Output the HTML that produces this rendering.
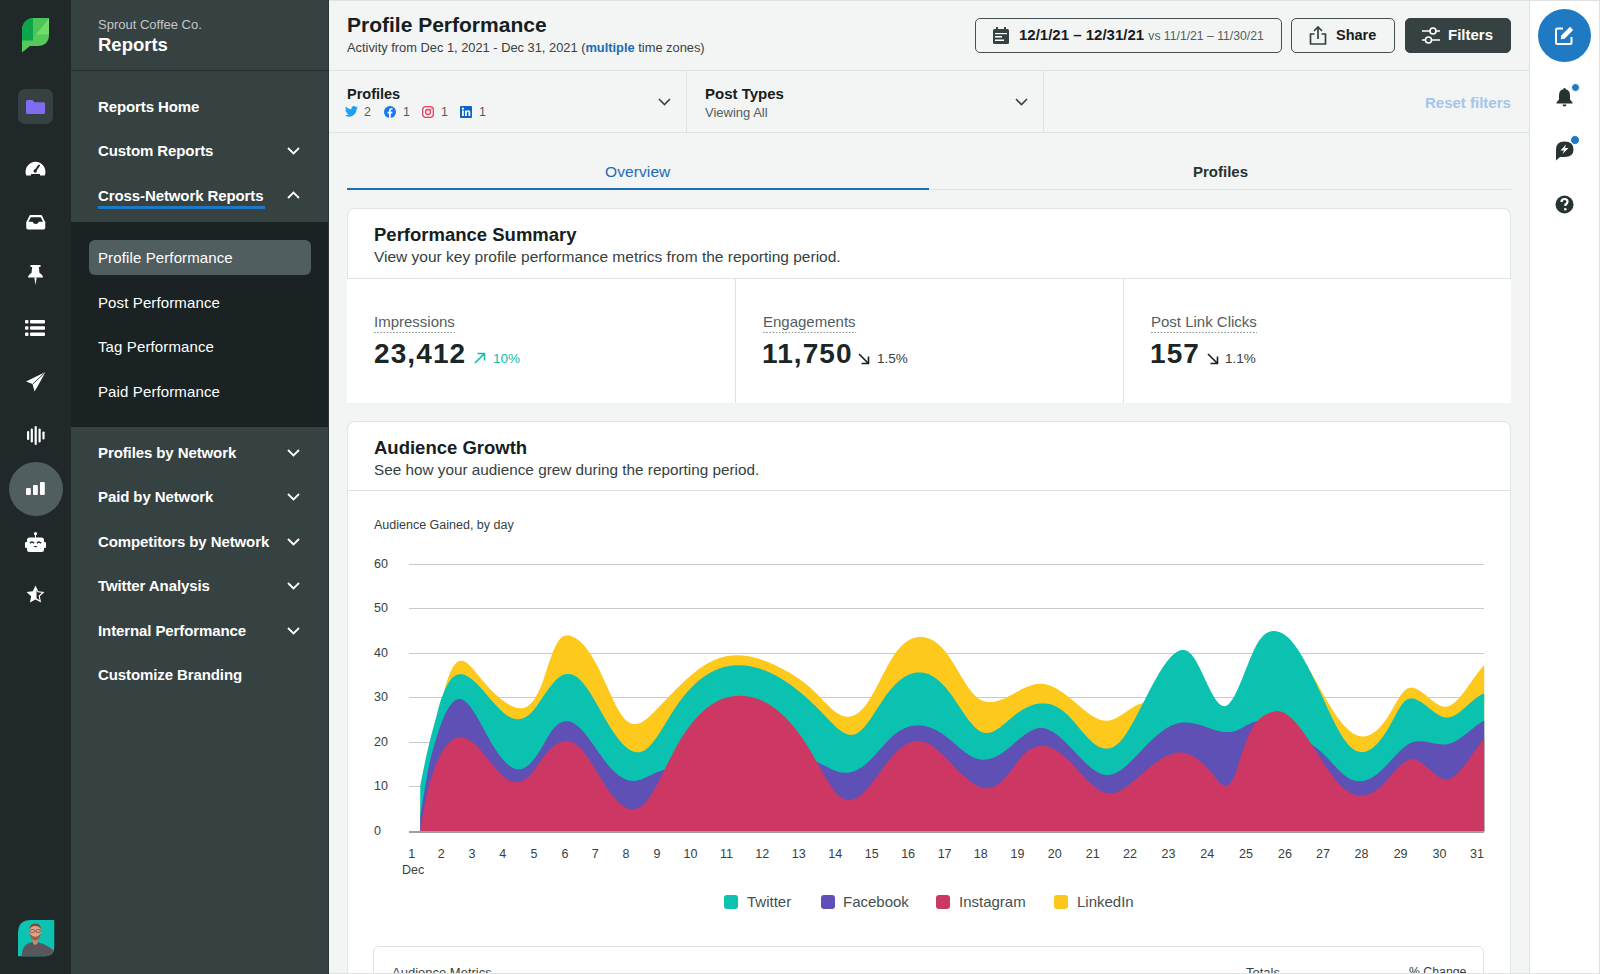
<!DOCTYPE html>
<html><head><meta charset="utf-8">
<style>
*{box-sizing:border-box;margin:0;padding:0}
html,body{width:1600px;height:974px;overflow:hidden;background:#f3f4f4;font-family:"Liberation Sans",sans-serif}
.abs{position:absolute}
svg{position:absolute;overflow:visible}
#rail{position:absolute;left:0;top:0;width:71px;height:974px;background:#202829}
#side{position:absolute;left:71px;top:0;width:258px;height:974px;background:#364141;border-right:1px solid #2b3535}
#side .hdr{position:absolute;left:0;top:0;width:257px;height:71px;border-bottom:1px solid #263030}
.nav{position:absolute;left:27px;color:#fff;font-size:15px;font-weight:700;white-space:nowrap;letter-spacing:-0.1px}
#sub{position:absolute;left:0;top:222px;width:257px;height:205px;background:#1a2223}
.subi{position:absolute;left:27px;color:#fff;font-size:15px;white-space:nowrap;letter-spacing:0.12px}
#rrail{position:absolute;left:1529px;top:0;width:71px;height:974px;background:#fff;border-left:1px solid #dfe2e2}
.t{position:absolute;white-space:nowrap;line-height:normal}
.btn{position:absolute;top:18px;height:35px;border:1px solid #455151;border-radius:5px;background:transparent}
.card{position:absolute;background:#fff;border:1px solid #e1e4e4;border-radius:8px}
.hl{position:absolute;height:1px;background:#dfe2e2}
.vl{position:absolute;width:1px;background:#dfe2e2}
.dk{color:#162020}
.ylab{position:absolute;left:374px;font-size:12.5px;color:#364141;width:16px;text-align:left}
.xlab{position:absolute;top:847px;font-size:12.5px;color:#364141;width:30px;margin-left:-15px;text-align:center}
.grid{position:absolute;left:409px;width:1075px;height:1px;background:#c6cbcb}
.sw{position:absolute;top:895px;width:14px;height:14px;border-radius:3px}
.leg{position:absolute;top:893px;font-size:15px;color:#445050}
.mlab{position:absolute;top:313px;font-size:15px;color:#515e5f;padding-bottom:3px;background:linear-gradient(to right,#8b9595 50%,transparent 50%) left bottom/3.2px 1.3px repeat-x}
.mval{position:absolute;top:338px;font-size:28px;font-weight:700;color:#1b2626;letter-spacing:1.1px}
.mpct{position:absolute;top:351px;font-size:13.5px;color:#364141}
</style></head><body>
<!-- left rail -->
<div id="rail">
  <svg style="left:22px;top:18px" width="28" height="35" viewBox="0 0 28 35">
    <path d="M0 12.5 C0 5 5 0 12 0 L27 0 L27 17 C27 24 22.5 28 16 28 L8 28 L0 34.5 Z" fill="#55c95a"/>
    <path d="M0 12.5 C0 5.5 4.5 0.3 11 0 L11 22.5 L0 22.5 Z" fill="#0da54b"/>
    <path d="M11 0 L27 0 L11 20.5 Z" fill="#4cc459"/>
    <path d="M13.9 16.5 L27 0.5 L27 16.5 Z" fill="#74db6b"/>
  </svg>
  <div class="abs" style="left:18px;top:89px;width:35px;height:35px;border-radius:7px;background:#364141"></div>
  <svg style="left:26px;top:100px" width="19" height="14" viewBox="0 0 19 14"><path d="M0 1.5 Q0 0 1.5 0 L6.5 0 L8.5 2.3 L17.5 2.3 Q19 2.3 19 3.8 L19 12.5 Q19 14 17.5 14 L1.5 14 Q0 14 0 12.5 Z" fill="#7f6cf0"/></svg>
  <!-- gauge -->
  <svg style="left:25px;top:159px" width="21" height="17" viewBox="0 0 21 17"><path d="M1.2 16.5 A10 10 0 1 1 19.8 16.5 Z" fill="#fff"/><path d="M14 6.5 L10.5 11.5" stroke="#202829" stroke-width="2" stroke-linecap="round"/><circle cx="10.2" cy="12" r="1.7" fill="#202829"/><rect x="6" y="15" width="9" height="2" fill="#202829"/></svg>
  <!-- inbox -->
  <svg style="left:25.5px;top:214.5px" width="19.5" height="14.5" viewBox="0 0 21 16"><path d="M4 0 L17 0 L21 8 L21 14 Q21 16 19 16 L2 16 Q0 16 0 14 L0 8 Z" fill="#fff"/><path d="M5 2.5 L16 2.5 L18.5 7.5 L14 7.5 Q13 10 10.5 10 Q8 10 7 7.5 L2.5 7.5 Z" fill="#202829"/></svg>
  <!-- pin -->
  <svg style="left:28px;top:265px" width="15" height="20" viewBox="0 0 15 20"><path d="M2.5 0 L12.5 0 L12.5 2 L10.8 2 L11.5 8 Q15 10 15 12.5 L0 12.5 Q0 10 3.5 8 L4.2 2 L2.5 2 Z" fill="#fff"/><path d="M6.3 12.5 L8.7 12.5 L7.5 20 Z" fill="#fff"/></svg>
  <!-- list -->
  <svg style="left:25px;top:320px" width="20" height="16" viewBox="0 0 20 16"><rect x="0" y="0" width="3.5" height="3.5" rx="1" fill="#fff"/><rect x="0" y="6.2" width="3.5" height="3.5" rx="1" fill="#fff"/><rect x="0" y="12.4" width="3.5" height="3.5" rx="1" fill="#fff"/><rect x="5" y="0" width="15" height="3.5" rx="1" fill="#fff"/><rect x="5" y="6.2" width="15" height="3.5" rx="1" fill="#fff"/><rect x="5" y="12.4" width="15" height="3.5" rx="1" fill="#fff"/></svg>
  <!-- send -->
  <svg style="left:26px;top:372px" width="20" height="20" viewBox="0 0 20 20"><path d="M19.5 0 L0 9.5 L6.5 12 L8.5 19.5 L11.5 14.5 Z" fill="#fff"/><path d="M19.5 0 L6.8 12" stroke="#202829" stroke-width="0.9"/></svg>
  <!-- waveform -->
  <svg style="left:27px;top:426px" width="18" height="19" viewBox="0 0 18 19"><rect x="0" y="5" width="2.2" height="9" rx="1.1" fill="#fff"/><rect x="3.7" y="2.5" width="2.2" height="14" rx="1.1" fill="#fff"/><rect x="7.6" y="0" width="2.2" height="19" rx="1.1" fill="#fff"/><rect x="11.5" y="2.5" width="2.2" height="14" rx="1.1" fill="#fff"/><rect x="15.4" y="5.5" width="2.2" height="8" rx="1.1" fill="#fff"/></svg>
  <div class="abs" style="left:9px;top:462px;width:54px;height:54px;border-radius:50%;background:#515e5f"></div>
  <svg style="left:26px;top:482px" width="19" height="13" viewBox="0 0 19 13"><rect x="0" y="6" width="4.8" height="7" rx="1" fill="#fff"/><rect x="7" y="3" width="4.8" height="10" rx="1" fill="#fff"/><rect x="14" y="0" width="4.8" height="13" rx="1" fill="#fff"/></svg>
  <!-- bot -->
  <svg style="left:25px;top:532px" width="21" height="20" viewBox="0 0 21 20"><circle cx="10.5" cy="1.7" r="1.6" fill="#fff"/><rect x="10" y="3" width="1" height="3" fill="#fff"/><rect x="2" y="5.5" width="17" height="14.5" rx="2.5" fill="#fff"/><rect x="0" y="10" width="21" height="6" rx="1" fill="#fff"/><path d="M5 11.3 Q7 8.8 9 11.3" stroke="#202829" stroke-width="1.6" fill="none"/><path d="M12 11.3 Q14 8.8 16 11.3" stroke="#202829" stroke-width="1.6" fill="none"/><path d="M8.5 14 Q10.5 16.5 12.5 14 Z" fill="#202829"/></svg>
  <!-- star -->
  <svg style="left:26px;top:585px" width="19" height="19" viewBox="0 0 19 19"><path d="M9.5 0.5 L12.2 6.3 L18.5 7 L13.8 11.3 L15.1 17.6 L9.5 14.4 L3.9 17.6 L5.2 11.3 L0.5 7 L6.8 6.3 Z" fill="#fff"/><path d="M10.5 5 L11.5 7.3 L15.8 7.8 L12.6 10.8 L13.5 15.2 L10.5 13.3 Z" fill="#202829"/></svg>
  <!-- avatar -->
  <svg style="left:17.5px;top:920px" width="36.5" height="36.5" viewBox="0 0 36.5 36.5">
    <defs><clipPath id="av"><path d="M0 13 Q0 0 13 0 L36.5 0 L36.5 26 Q36.5 36.5 26 36.5 L0 36.5 Z"/></clipPath></defs>
    <g clip-path="url(#av)">
      <rect x="0" y="0" width="36.5" height="36.5" fill="#0bc3b0"/>
      <path d="M3.5 36.5 L4.5 30 Q6.5 24 12.5 22.5 L17 21 L21 22.5 Q30 25 36 31 L36 36.5 Z" fill="#58575b"/>
      <path d="M14.5 19 L20 19 L19.5 23.5 L17.3 25 L15 23.5 Z" fill="#c98a70"/>
      <ellipse cx="17.3" cy="11.5" rx="5.6" ry="7.6" fill="#dfa488"/>
      <path d="M11.6 10 Q11.5 3.5 17.3 3.6 Q23 3.5 23 10 Q22 6 17.3 6 Q12.5 6 11.6 10 Z" fill="#7a4a35"/>
      <path d="M11.8 13 Q12.5 20 17.3 20.5 Q22 20 22.8 13 Q21 16.5 17.3 16.8 Q13.5 16.5 11.8 13 Z" fill="#9c5a3e"/>
      <rect x="12.3" y="9.6" width="4.3" height="2.8" rx="1" fill="none" stroke="#4a3a36" stroke-width="0.6"/><rect x="18" y="9.6" width="4.3" height="2.8" rx="1" fill="none" stroke="#4a3a36" stroke-width="0.6"/>
    </g>
  </svg>
</div>

<!-- sidebar -->
<div id="side">
  <div class="hdr"></div>
  <div class="t" style="left:27px;top:17px;font-size:13px;color:#c3c8c8">Sprout Coffee Co.</div>
  <div class="t" style="left:27px;top:34px;font-size:18.5px;font-weight:700;color:#fff">Reports</div>
  <div class="nav" style="top:98px">Reports Home</div>
  <div class="nav" style="top:142px">Custom Reports</div>
  <div class="nav" style="top:187px">Cross-Network Reports</div>
  <div class="abs" style="left:27px;top:206px;width:167px;height:3px;background:#2079c3"></div>
  <svg style="left:216px;top:147px" width="13" height="8" viewBox="0 0 13 8"><path d="M1 1 L6.5 6.5 L12 1" stroke="#fff" stroke-width="1.8" fill="none"/></svg>
  <svg style="left:216px;top:191px" width="13" height="8" viewBox="0 0 13 8"><path d="M1 7 L6.5 1.5 L12 7" stroke="#fff" stroke-width="1.8" fill="none"/></svg>
  <div id="sub">
    <div class="abs" style="left:18px;top:18px;width:222px;height:35px;border-radius:6px;background:#515e5f"></div>
    <div class="subi" style="top:27px">Profile Performance</div>
    <div class="subi" style="top:72px">Post Performance</div>
    <div class="subi" style="top:116px">Tag Performance</div>
    <div class="subi" style="top:161px">Paid Performance</div>
  </div>
  <div class="nav" style="top:444px">Profiles by Network</div>
  <div class="nav" style="top:488px">Paid by Network</div>
  <div class="nav" style="top:533px">Competitors by Network</div>
  <div class="nav" style="top:577px">Twitter Analysis</div>
  <div class="nav" style="top:622px">Internal Performance</div>
  <div class="nav" style="top:666px">Customize Branding</div>
  <svg style="left:216px;top:449px" width="13" height="8" viewBox="0 0 13 8"><path d="M1 1 L6.5 6.5 L12 1" stroke="#fff" stroke-width="1.8" fill="none"/></svg>
  <svg style="left:216px;top:493px" width="13" height="8" viewBox="0 0 13 8"><path d="M1 1 L6.5 6.5 L12 1" stroke="#fff" stroke-width="1.8" fill="none"/></svg>
  <svg style="left:216px;top:538px" width="13" height="8" viewBox="0 0 13 8"><path d="M1 1 L6.5 6.5 L12 1" stroke="#fff" stroke-width="1.8" fill="none"/></svg>
  <svg style="left:216px;top:582px" width="13" height="8" viewBox="0 0 13 8"><path d="M1 1 L6.5 6.5 L12 1" stroke="#fff" stroke-width="1.8" fill="none"/></svg>
  <svg style="left:216px;top:627px" width="13" height="8" viewBox="0 0 13 8"><path d="M1 1 L6.5 6.5 L12 1" stroke="#fff" stroke-width="1.8" fill="none"/></svg>
</div>

<!-- header -->
<div class="t dk" style="left:347px;top:13px;font-size:21px;font-weight:700">Profile Performance</div>
<div class="t" style="left:347px;top:39.5px;font-size:12.85px;color:#364141">Activity from Dec 1, 2021 - Dec 31, 2021 (<b style="color:#1b6cb8">multiple</b> time zones)</div>
<div class="btn" style="left:975px;width:307px"></div>
<svg style="left:993px;top:27px" width="16" height="17" viewBox="0 0 16 17"><rect x="3" y="0" width="2" height="4" fill="#364141"/><rect x="11" y="0" width="2" height="4" fill="#364141"/><rect x="0" y="2" width="16" height="15" rx="1.5" fill="#364141"/><rect x="2" y="6" width="12" height="1.2" fill="#fff"/><rect x="2" y="9" width="7" height="1.5" fill="#fff"/><rect x="2" y="12.5" width="9" height="1.5" fill="#fff"/></svg>
<div class="t dk" style="left:1019px;top:26px;font-size:15px;font-weight:700">12/1/21 – 12/31/21 <span style="font-size:12.2px;font-weight:400;color:#515e5f">vs 11/1/21 – 11/30/21</span></div>
<div class="btn" style="left:1291px;width:104px"></div>
<svg style="left:1309px;top:26px" width="18" height="19" viewBox="0 0 18 19"><path d="M9 13 L9 1.5 M5 5 L9 1 L13 5" stroke="#364141" stroke-width="1.7" fill="none"/><path d="M5.5 8 L1.5 8 L1.5 18 L16.5 18 L16.5 8 L12.5 8" stroke="#364141" stroke-width="1.7" fill="none"/></svg>
<div class="t dk" style="left:1336px;top:27px;font-size:14.5px;font-weight:700">Share</div>
<div class="btn" style="left:1405px;width:106px;background:#364141;border-color:#364141"></div>
<svg style="left:1421px;top:26px" width="20" height="19" viewBox="0 0 20 19"><path d="M1 5 L19 5 M1 14 L19 14" stroke="#fff" stroke-width="1.6"/><circle cx="12" cy="5" r="3" fill="#364141" stroke="#fff" stroke-width="1.6"/><circle cx="7.5" cy="14" r="3" fill="#364141" stroke="#fff" stroke-width="1.6"/></svg>
<div class="t" style="left:1448px;top:26px;font-size:15px;font-weight:700;color:#fff">Filters</div>
<div class="hl" style="left:329px;top:70px;width:1200px"></div>

<!-- filter bar -->
<div class="t dk" style="left:347px;top:86px;font-size:14.5px;font-weight:700">Profiles</div>
<svg style="left:345px;top:106px" width="13" height="11" viewBox="0 0 24 20"><path d="M24 2.4c-.9.4-1.8.6-2.8.8 1-.6 1.8-1.6 2.2-2.7-1 .6-2 1-3.1 1.2C19.3.7 18 0 16.6 0c-2.7 0-4.9 2.2-4.9 4.9 0 .4 0 .8.1 1.1C7.7 5.8 4.1 3.9 1.7.9c-.4.7-.7 1.6-.7 2.5 0 1.7.9 3.2 2.2 4.1-.8 0-1.6-.2-2.2-.6v.1c0 2.4 1.7 4.4 3.9 4.8-.4.1-.8.2-1.3.2-.3 0-.6 0-.9-.1.6 2 2.4 3.4 4.6 3.4-1.7 1.3-3.8 2.1-6.1 2.1-.4 0-.8 0-1.2-.1 2.2 1.4 4.8 2.2 7.5 2.2 9.1 0 14-7.5 14-14v-.6c1-.7 1.8-1.6 2.5-2.5z" fill="#1da1f2"/></svg>
<div class="t" style="left:364px;top:105px;font-size:12.5px;color:#515e5f">2</div>
<svg style="left:384px;top:106px" width="12" height="12" viewBox="0 0 24 24"><circle cx="12" cy="12" r="12" fill="#1877f2"/><path d="M13.5 24 L13.5 15 L16.5 15 L17 11.5 L13.5 11.5 L13.5 9.3 C13.5 8.3 13.8 7.6 15.2 7.6 L17 7.6 L17 4.5 C16.7 4.4 15.6 4.3 14.4 4.3 C11.8 4.3 10 5.9 10 8.8 L10 11.5 L7 11.5 L7 15 L10 15 L10 24 Z" fill="#fff"/></svg>
<div class="t" style="left:403px;top:105px;font-size:12.5px;color:#515e5f">1</div>
<svg style="left:422px;top:106px" width="12" height="12" viewBox="0 0 12 12"><rect x="0.7" y="0.7" width="10.6" height="10.6" rx="3" fill="none" stroke="#e4405f" stroke-width="1.3"/><circle cx="6" cy="6" r="2.5" fill="none" stroke="#e4405f" stroke-width="1.3"/><circle cx="9" cy="3" r="0.7" fill="#e4405f"/></svg>
<div class="t" style="left:441px;top:105px;font-size:12.5px;color:#515e5f">1</div>
<svg style="left:460px;top:106px" width="12" height="12" viewBox="0 0 12 12"><rect x="0" y="0" width="12" height="12" rx="1" fill="#0a66c2"/><rect x="2" y="4.5" width="1.8" height="5.5" fill="#fff"/><circle cx="2.9" cy="2.7" r="1.1" fill="#fff"/><path d="M5 4.5 L6.7 4.5 L6.7 5.3 Q7.3 4.3 8.5 4.3 Q10.3 4.3 10.3 6.6 L10.3 10 L8.5 10 L8.5 7 Q8.5 5.8 7.7 5.8 Q6.8 5.8 6.8 7 L6.8 10 L5 10 Z" fill="#fff"/></svg>
<div class="t" style="left:479px;top:105px;font-size:12.5px;color:#515e5f">1</div>
<svg style="left:658px;top:98px" width="13" height="8" viewBox="0 0 13 8"><path d="M1 1 L6.5 6.5 L12 1" stroke="#364141" stroke-width="1.6" fill="none"/></svg>
<div class="vl" style="left:686px;top:71px;height:61px"></div>
<div class="t dk" style="left:705px;top:85px;font-size:15px;font-weight:700">Post Types</div>
<div class="t" style="left:705px;top:105px;font-size:13px;color:#515e5f">Viewing All</div>
<svg style="left:1015px;top:98px" width="13" height="8" viewBox="0 0 13 8"><path d="M1 1 L6.5 6.5 L12 1" stroke="#364141" stroke-width="1.6" fill="none"/></svg>
<div class="vl" style="left:1043px;top:71px;height:61px"></div>
<div class="t" style="left:1425px;top:94px;font-size:15px;font-weight:700;color:#a3c6ea">Reset filters</div>
<div class="hl" style="left:329px;top:132px;width:1200px"></div>

<!-- tabs -->
<div class="t" style="left:605px;top:163px;font-size:15.5px;color:#1b6cb8;letter-spacing:0.1px">Overview</div>
<div class="t dk" style="left:1193px;top:163px;font-size:15px;font-weight:700;color:#273333">Profiles</div>
<div class="hl" style="left:929px;top:189px;width:582px"></div>
<div class="abs" style="left:347px;top:188px;width:582px;height:2px;background:#1a6fbf"></div>

<!-- performance summary -->
<div class="card" style="left:347px;top:208px;width:1164px;height:71px;border-radius:8px 8px 0 0"></div>
<div class="abs" style="left:347px;top:279px;width:1164px;height:124px;background:#fff"></div>
<div class="hl" style="left:347px;top:278px;width:1164px"></div>
<div class="vl" style="left:735px;top:279px;height:124px"></div>
<div class="vl" style="left:1123px;top:279px;height:124px"></div>
<div class="t dk" style="left:374px;top:224px;font-size:18.5px;font-weight:700">Performance Summary</div>
<div class="t" style="left:374px;top:248px;font-size:15.5px;color:#364141">View your key profile performance metrics from the reporting period.</div>

<div class="mlab" style="left:374px">Impressions</div>
<div class="mval" style="left:374px">23,412</div>
<svg style="left:474px;top:352px" width="12" height="12" viewBox="0 0 12 12"><path d="M1 11 L10.5 1.5 M3.5 1.5 L10.5 1.5 L10.5 8.5" stroke="#12bdac" stroke-width="1.6" fill="none"/></svg>
<div class="mpct" style="left:493px;color:#12bdac">10%</div>

<div class="mlab" style="left:763px">Engagements</div>
<div class="mval" style="left:762px">11,750</div>
<svg style="left:858px;top:353px" width="12" height="12" viewBox="0 0 12 12"><path d="M1 1 L10.5 10.5 M3.5 10.5 L10.5 10.5 L10.5 3.5" stroke="#162020" stroke-width="1.6" fill="none"/></svg>
<div class="mpct" style="left:877px">1.5%</div>

<div class="mlab" style="left:1151px">Post Link Clicks</div>
<div class="mval" style="left:1150px">157</div>
<svg style="left:1207px;top:353px" width="12" height="12" viewBox="0 0 12 12"><path d="M1 1 L10.5 10.5 M3.5 10.5 L10.5 10.5 L10.5 3.5" stroke="#162020" stroke-width="1.6" fill="none"/></svg>
<div class="mpct" style="left:1225px">1.1%</div>

<!-- audience growth -->
<div class="card" style="left:347px;top:421px;width:1164px;height:600px"></div>
<div class="hl" style="left:348px;top:490px;width:1162px"></div>
<div class="t dk" style="left:374px;top:437px;font-size:18.5px;font-weight:700">Audience Growth</div>
<div class="t" style="left:374px;top:460.5px;font-size:15.3px;color:#364141">See how your audience grew during the reporting period.</div>
<div class="t" style="left:374px;top:517.5px;font-size:12.5px;color:#364141">Audience Gained, by day</div>

<div class="grid" style="top:564px"></div>
<div class="grid" style="top:608px"></div>
<div class="grid" style="top:653px"></div>
<div class="grid" style="top:697px"></div>
<div class="grid" style="top:742px"></div>
<div class="grid" style="top:786px"></div>
<div class="ylab" style="top:557px">60</div>
<div class="ylab" style="top:601px">50</div>
<div class="ylab" style="top:646px">40</div>
<div class="ylab" style="top:690px">30</div>
<div class="ylab" style="top:735px">20</div>
<div class="ylab" style="top:779px">10</div>
<div class="ylab" style="top:824px">0</div>

<svg style="left:0;top:0" width="1600" height="974" viewBox="0 0 1600 974"><path d="M420.2 831.5 L420.2 812.0 L421.2 805.8 L422.2 799.6 L423.2 793.6 L424.2 787.6 L425.2 781.8 L426.2 776.1 L427.2 770.5 L428.2 765.0 L429.2 759.6 L430.2 754.3 L431.2 749.1 L432.2 744.0 L433.2 739.0 L434.2 734.2 L435.2 729.4 L436.2 724.7 L437.2 720.1 L438.2 715.6 L439.2 711.2 L440.2 706.9 L441.2 702.8 L442.2 698.7 L443.2 694.8 L444.2 691.1 L445.2 687.4 L446.2 683.9 L447.2 680.6 L448.2 677.6 L449.2 675.0 L450.2 672.6 L451.2 670.4 L452.2 668.4 L453.2 666.7 L454.2 665.2 L455.2 663.9 L456.2 662.9 L457.2 662.1 L458.2 661.5 L459.2 661.0 L460.2 660.8 L461.2 660.7 L462.2 660.8 L463.2 661.1 L464.2 661.5 L465.2 662.0 L466.2 662.6 L467.2 663.3 L468.2 664.1 L469.2 665.0 L470.2 666.0 L471.2 667.0 L472.2 668.1 L473.2 669.2 L474.2 670.4 L475.2 671.6 L476.2 672.8 L477.2 674.0 L478.2 675.3 L479.2 676.5 L480.2 677.7 L481.2 678.8 L482.2 680.0 L483.2 681.2 L484.2 682.3 L485.2 683.5 L486.2 684.6 L487.2 685.7 L488.2 686.8 L489.2 687.9 L490.2 688.9 L491.2 689.9 L492.2 691.0 L493.2 692.0 L494.2 692.9 L495.2 693.9 L496.2 694.8 L497.2 695.8 L498.2 696.6 L499.2 697.5 L500.2 698.4 L501.2 699.2 L502.2 700.0 L503.2 700.7 L504.2 701.4 L505.2 702.1 L506.2 702.8 L507.2 703.5 L508.2 704.1 L509.2 704.7 L510.2 705.2 L511.2 705.7 L512.2 706.2 L513.2 706.6 L514.2 707.0 L515.2 707.4 L516.2 707.7 L517.2 707.9 L518.2 708.1 L519.2 708.2 L520.2 708.3 L521.2 708.3 L522.2 708.2 L523.2 708.0 L524.2 707.7 L525.2 707.4 L526.2 706.9 L527.2 706.4 L528.2 705.7 L529.2 704.9 L530.2 704.0 L531.2 703.1 L532.2 701.9 L533.2 700.7 L534.2 699.3 L535.2 697.8 L536.2 696.1 L537.2 694.3 L538.2 692.4 L539.2 690.3 L540.2 688.0 L541.2 685.6 L542.2 683.0 L543.2 680.2 L544.2 677.3 L545.2 674.3 L546.2 671.3 L547.2 668.2 L548.2 665.1 L549.2 662.1 L550.2 659.2 L551.2 656.4 L552.2 653.7 L553.2 651.2 L554.2 648.9 L555.2 646.7 L556.2 644.7 L557.2 642.9 L558.2 641.3 L559.2 639.9 L560.2 638.7 L561.2 637.7 L562.2 636.9 L563.2 636.3 L564.2 635.9 L565.2 635.6 L566.2 635.4 L567.2 635.4 L568.2 635.5 L569.2 635.6 L570.2 635.8 L571.2 636.1 L572.2 636.5 L573.2 636.9 L574.2 637.4 L575.2 637.9 L576.2 638.5 L577.2 639.2 L578.2 639.9 L579.2 640.7 L580.2 641.6 L581.2 642.5 L582.2 643.5 L583.2 644.6 L584.2 645.7 L585.2 646.9 L586.2 648.1 L587.2 649.4 L588.2 650.8 L589.2 652.2 L590.2 653.7 L591.2 655.3 L592.2 656.9 L593.2 658.5 L594.2 660.3 L595.2 662.1 L596.2 663.9 L597.2 665.8 L598.2 667.8 L599.2 669.8 L600.2 671.8 L601.2 673.9 L602.2 676.1 L603.2 678.2 L604.2 680.4 L605.2 682.6 L606.2 684.8 L607.2 687.0 L608.2 689.2 L609.2 691.4 L610.2 693.6 L611.2 695.8 L612.2 697.9 L613.2 699.9 L614.2 702.0 L615.2 704.0 L616.2 705.9 L617.2 707.7 L618.2 709.5 L619.2 711.2 L620.2 712.9 L621.2 714.4 L622.2 715.8 L623.2 717.2 L624.2 718.4 L625.2 719.5 L626.2 720.4 L627.2 721.3 L628.2 722.0 L629.2 722.6 L630.2 723.1 L631.2 723.5 L632.2 723.8 L633.2 724.0 L634.2 724.1 L635.2 724.1 L636.2 724.0 L637.2 723.9 L638.2 723.6 L639.2 723.3 L640.2 722.9 L641.2 722.4 L642.2 721.9 L643.2 721.3 L644.2 720.6 L645.2 719.9 L646.2 719.2 L647.2 718.4 L648.2 717.5 L649.2 716.6 L650.2 715.7 L651.2 714.8 L652.2 713.8 L653.2 712.8 L654.2 711.8 L655.2 710.8 L656.2 709.8 L657.2 708.7 L658.2 707.7 L659.2 706.6 L660.2 705.6 L661.2 704.6 L662.2 703.5 L663.2 702.5 L664.2 701.4 L665.2 700.4 L666.2 699.4 L667.2 698.3 L668.2 697.3 L669.2 696.2 L670.2 695.2 L671.2 694.2 L672.2 693.2 L673.2 692.2 L674.2 691.1 L675.2 690.1 L676.2 689.1 L677.2 688.1 L678.2 687.2 L679.2 686.2 L680.2 685.2 L681.2 684.2 L682.2 683.3 L683.2 682.3 L684.2 681.4 L685.2 680.5 L686.2 679.6 L687.2 678.7 L688.2 677.8 L689.2 676.9 L690.2 676.0 L691.2 675.2 L692.2 674.3 L693.2 673.5 L694.2 672.7 L695.2 671.9 L696.2 671.1 L697.2 670.3 L698.2 669.6 L699.2 668.8 L700.2 668.1 L701.2 667.4 L702.2 666.7 L703.2 666.0 L704.2 665.4 L705.2 664.8 L706.2 664.2 L707.2 663.6 L708.2 663.0 L709.2 662.4 L710.2 661.9 L711.2 661.4 L712.2 660.9 L713.2 660.5 L714.2 660.0 L715.2 659.6 L716.2 659.2 L717.2 658.8 L718.2 658.5 L719.2 658.1 L720.2 657.8 L721.2 657.5 L722.2 657.2 L723.2 657.0 L724.2 656.7 L725.2 656.5 L726.2 656.3 L727.2 656.1 L728.2 656.0 L729.2 655.8 L730.2 655.7 L731.2 655.6 L732.2 655.5 L733.2 655.4 L734.2 655.4 L735.2 655.3 L736.2 655.3 L737.2 655.3 L738.2 655.3 L739.2 655.3 L740.2 655.4 L741.2 655.4 L742.2 655.5 L743.2 655.6 L744.2 655.7 L745.2 655.8 L746.2 655.9 L747.2 656.1 L748.2 656.2 L749.2 656.4 L750.2 656.6 L751.2 656.8 L752.2 657.0 L753.2 657.2 L754.2 657.5 L755.2 657.7 L756.2 658.0 L757.2 658.3 L758.2 658.6 L759.2 658.9 L760.2 659.2 L761.2 659.5 L762.2 659.9 L763.2 660.2 L764.2 660.6 L765.2 661.0 L766.2 661.3 L767.2 661.7 L768.2 662.1 L769.2 662.6 L770.2 663.0 L771.2 663.4 L772.2 663.9 L773.2 664.3 L774.2 664.8 L775.2 665.2 L776.2 665.7 L777.2 666.2 L778.2 666.7 L779.2 667.2 L780.2 667.7 L781.2 668.2 L782.2 668.8 L783.2 669.3 L784.2 669.8 L785.2 670.4 L786.2 670.9 L787.2 671.5 L788.2 672.1 L789.2 672.6 L790.2 673.2 L791.2 673.8 L792.2 674.4 L793.2 675.0 L794.2 675.7 L795.2 676.3 L796.2 677.0 L797.2 677.6 L798.2 678.3 L799.2 679.0 L800.2 679.7 L801.2 680.4 L802.2 681.1 L803.2 681.9 L804.2 682.6 L805.2 683.4 L806.2 684.2 L807.2 685.0 L808.2 685.9 L809.2 686.7 L810.2 687.6 L811.2 688.5 L812.2 689.4 L813.2 690.3 L814.2 691.3 L815.2 692.2 L816.2 693.2 L817.2 694.3 L818.2 695.3 L819.2 696.3 L820.2 697.4 L821.2 698.4 L822.2 699.4 L823.2 700.5 L824.2 701.5 L825.2 702.6 L826.2 703.6 L827.2 704.6 L828.2 705.6 L829.2 706.5 L830.2 707.5 L831.2 708.4 L832.2 709.3 L833.2 710.1 L834.2 710.9 L835.2 711.7 L836.2 712.4 L837.2 713.1 L838.2 713.7 L839.2 714.3 L840.2 714.8 L841.2 715.3 L842.2 715.7 L843.2 716.0 L844.2 716.3 L845.2 716.5 L846.2 716.7 L847.2 716.7 L848.2 716.7 L849.2 716.7 L850.2 716.5 L851.2 716.3 L852.2 716.1 L853.2 715.7 L854.2 715.3 L855.2 714.8 L856.2 714.3 L857.2 713.6 L858.2 712.9 L859.2 712.1 L860.2 711.3 L861.2 710.3 L862.2 709.3 L863.2 708.2 L864.2 707.1 L865.2 705.8 L866.2 704.5 L867.2 703.1 L868.2 701.6 L869.2 700.0 L870.2 698.4 L871.2 696.7 L872.2 695.0 L873.2 693.2 L874.2 691.4 L875.2 689.6 L876.2 687.7 L877.2 685.8 L878.2 683.9 L879.2 681.9 L880.2 680.0 L881.2 678.0 L882.2 676.1 L883.2 674.1 L884.2 672.2 L885.2 670.3 L886.2 668.4 L887.2 666.6 L888.2 664.7 L889.2 663.0 L890.2 661.2 L891.2 659.6 L892.2 657.9 L893.2 656.4 L894.2 654.9 L895.2 653.4 L896.2 652.1 L897.2 650.8 L898.2 649.5 L899.2 648.4 L900.2 647.3 L901.2 646.2 L902.2 645.2 L903.2 644.3 L904.2 643.4 L905.2 642.6 L906.2 641.9 L907.2 641.2 L908.2 640.5 L909.2 640.0 L910.2 639.4 L911.2 639.0 L912.2 638.5 L913.2 638.2 L914.2 637.8 L915.2 637.6 L916.2 637.3 L917.2 637.2 L918.2 637.1 L919.2 637.0 L920.2 636.9 L921.2 637.0 L922.2 637.0 L923.2 637.1 L924.2 637.3 L925.2 637.4 L926.2 637.7 L927.2 638.0 L928.2 638.3 L929.2 638.7 L930.2 639.1 L931.2 639.6 L932.2 640.1 L933.2 640.6 L934.2 641.3 L935.2 641.9 L936.2 642.6 L937.2 643.4 L938.2 644.2 L939.2 645.1 L940.2 646.0 L941.2 647.0 L942.2 648.1 L943.2 649.2 L944.2 650.3 L945.2 651.5 L946.2 652.8 L947.2 654.1 L948.2 655.5 L949.2 656.9 L950.2 658.4 L951.2 659.9 L952.2 661.5 L953.2 663.1 L954.2 664.7 L955.2 666.4 L956.2 668.0 L957.2 669.7 L958.2 671.4 L959.2 673.1 L960.2 674.8 L961.2 676.4 L962.2 678.1 L963.2 679.7 L964.2 681.3 L965.2 682.9 L966.2 684.5 L967.2 686.0 L968.2 687.4 L969.2 688.8 L970.2 690.1 L971.2 691.4 L972.2 692.6 L973.2 693.8 L974.2 694.8 L975.2 695.8 L976.2 696.7 L977.2 697.5 L978.2 698.2 L979.2 698.9 L980.2 699.5 L981.2 700.0 L982.2 700.5 L983.2 700.9 L984.2 701.2 L985.2 701.5 L986.2 701.7 L987.2 701.9 L988.2 702.0 L989.2 702.1 L990.2 702.1 L991.2 702.1 L992.2 702.0 L993.2 701.9 L994.2 701.7 L995.2 701.5 L996.2 701.3 L997.2 701.0 L998.2 700.7 L999.2 700.4 L1000.2 700.1 L1001.2 699.7 L1002.2 699.3 L1003.2 698.9 L1004.2 698.4 L1005.2 698.0 L1006.2 697.5 L1007.2 697.0 L1008.2 696.5 L1009.2 696.0 L1010.2 695.5 L1011.2 695.0 L1012.2 694.4 L1013.2 693.9 L1014.2 693.4 L1015.2 692.8 L1016.2 692.3 L1017.2 691.7 L1018.2 691.2 L1019.2 690.7 L1020.2 690.1 L1021.2 689.6 L1022.2 689.1 L1023.2 688.6 L1024.2 688.1 L1025.2 687.7 L1026.2 687.2 L1027.2 686.8 L1028.2 686.4 L1029.2 686.0 L1030.2 685.7 L1031.2 685.3 L1032.2 685.0 L1033.2 684.7 L1034.2 684.5 L1035.2 684.3 L1036.2 684.1 L1037.2 684.0 L1038.2 683.8 L1039.2 683.8 L1040.2 683.7 L1041.2 683.8 L1042.2 683.8 L1043.2 683.9 L1044.2 684.1 L1045.2 684.2 L1046.2 684.5 L1047.2 684.7 L1048.2 685.0 L1049.2 685.3 L1050.2 685.7 L1051.2 686.1 L1052.2 686.5 L1053.2 687.0 L1054.2 687.5 L1055.2 688.0 L1056.2 688.5 L1057.2 689.1 L1058.2 689.7 L1059.2 690.3 L1060.2 690.9 L1061.2 691.6 L1062.2 692.3 L1063.2 693.0 L1064.2 693.7 L1065.2 694.4 L1066.2 695.2 L1067.2 696.0 L1068.2 696.7 L1069.2 697.5 L1070.2 698.3 L1071.2 699.1 L1072.2 700.0 L1073.2 700.8 L1074.2 701.6 L1075.2 702.5 L1076.2 703.3 L1077.2 704.1 L1078.2 705.0 L1079.2 705.8 L1080.2 706.7 L1081.2 707.5 L1082.2 708.4 L1083.2 709.2 L1084.2 710.0 L1085.2 710.8 L1086.2 711.6 L1087.2 712.4 L1088.2 713.1 L1089.2 713.8 L1090.2 714.5 L1091.2 715.2 L1092.2 715.9 L1093.2 716.5 L1094.2 717.1 L1095.2 717.6 L1096.2 718.1 L1097.2 718.6 L1098.2 719.0 L1099.2 719.4 L1100.2 719.8 L1101.2 720.1 L1102.2 720.3 L1103.2 720.5 L1104.2 720.6 L1105.2 720.7 L1106.2 720.7 L1107.2 720.7 L1108.2 720.6 L1109.2 720.5 L1110.2 720.2 L1111.2 720.0 L1112.2 719.7 L1113.2 719.3 L1114.2 718.9 L1115.2 718.4 L1116.2 717.9 L1117.2 717.4 L1118.2 716.9 L1119.2 716.3 L1120.2 715.7 L1121.2 715.0 L1122.2 714.4 L1123.2 713.7 L1124.2 713.1 L1125.2 712.4 L1126.2 711.7 L1127.2 711.1 L1128.2 710.4 L1129.2 709.7 L1130.2 709.1 L1131.2 708.4 L1132.2 707.8 L1133.2 707.2 L1134.2 706.6 L1135.2 706.1 L1136.2 705.6 L1137.2 705.1 L1138.2 704.6 L1139.2 704.2 L1140.2 703.9 L1141.2 703.6 L1142.2 703.3 L1143.2 703.1 L1144.2 702.9 L1145.2 702.9 L1146.2 702.8 L1147.2 702.8 L1148.2 702.9 L1149.2 703.0 L1150.2 703.2 L1151.2 703.4 L1152.2 703.6 L1153.2 703.9 L1154.2 704.2 L1155.2 704.6 L1156.2 705.0 L1157.2 705.4 L1158.2 705.8 L1159.2 706.2 L1160.2 706.7 L1161.2 707.2 L1162.2 707.7 L1163.2 708.2 L1164.2 708.7 L1165.2 709.2 L1166.2 709.7 L1167.2 710.2 L1168.2 710.7 L1169.2 711.2 L1170.2 711.6 L1171.2 712.1 L1172.2 712.5 L1173.2 713.0 L1174.2 713.4 L1175.2 713.8 L1176.2 714.2 L1177.2 714.6 L1178.2 715.0 L1179.2 715.4 L1180.2 715.7 L1181.2 716.0 L1182.2 716.4 L1183.2 716.7 L1184.2 717.0 L1185.2 717.3 L1186.2 717.5 L1187.2 717.8 L1188.2 718.0 L1189.2 718.3 L1190.2 718.5 L1191.2 718.7 L1192.2 718.9 L1193.2 719.1 L1194.2 719.3 L1195.2 719.4 L1196.2 719.6 L1197.2 719.7 L1198.2 719.8 L1199.2 719.9 L1200.2 720.0 L1201.2 720.1 L1202.2 720.2 L1203.2 720.2 L1204.2 720.2 L1205.2 720.3 L1206.2 720.3 L1207.2 720.3 L1208.2 720.3 L1209.2 720.3 L1210.2 720.2 L1211.2 720.2 L1212.2 720.1 L1213.2 720.1 L1214.2 720.0 L1215.2 719.9 L1216.2 719.8 L1217.2 719.6 L1218.2 719.5 L1219.2 719.4 L1220.2 719.2 L1221.2 719.0 L1222.2 718.8 L1223.2 718.6 L1224.2 718.4 L1225.2 718.2 L1226.2 718.0 L1227.2 717.7 L1228.2 717.5 L1229.2 717.2 L1230.2 716.9 L1231.2 716.6 L1232.2 716.2 L1233.2 715.9 L1234.2 715.5 L1235.2 715.1 L1236.2 714.7 L1237.2 714.3 L1238.2 713.8 L1239.2 713.3 L1240.2 712.8 L1241.2 712.2 L1242.2 711.7 L1243.2 711.1 L1244.2 710.4 L1245.2 709.8 L1246.2 709.1 L1247.2 708.4 L1248.2 707.6 L1249.2 706.8 L1250.2 706.0 L1251.2 705.1 L1252.2 704.2 L1253.2 703.2 L1254.2 702.2 L1255.2 701.2 L1256.2 700.2 L1257.2 699.0 L1258.2 697.9 L1259.2 696.7 L1260.2 695.4 L1261.2 694.1 L1262.2 692.8 L1263.2 691.4 L1264.2 690.0 L1265.2 688.5 L1266.2 686.9 L1267.2 685.4 L1268.2 683.7 L1269.2 682.1 L1270.2 680.4 L1271.2 678.7 L1272.2 677.1 L1273.2 675.4 L1274.2 673.7 L1275.2 672.0 L1276.2 670.4 L1277.2 668.8 L1278.2 667.2 L1279.2 665.7 L1280.2 664.2 L1281.2 662.8 L1282.2 661.4 L1283.2 660.1 L1284.2 658.9 L1285.2 657.8 L1286.2 656.8 L1287.2 655.9 L1288.2 655.1 L1289.2 654.4 L1290.2 653.8 L1291.2 653.4 L1292.2 653.1 L1293.2 652.9 L1294.2 652.9 L1295.2 653.1 L1296.2 653.4 L1297.2 653.9 L1298.2 654.6 L1299.2 655.4 L1300.2 656.4 L1301.2 657.5 L1302.2 658.7 L1303.2 660.1 L1304.2 661.5 L1305.2 663.0 L1306.2 664.5 L1307.2 666.1 L1308.2 667.8 L1309.2 669.4 L1310.2 671.1 L1311.2 672.8 L1312.2 674.6 L1313.2 676.3 L1314.2 678.1 L1315.2 679.8 L1316.2 681.6 L1317.2 683.4 L1318.2 685.2 L1319.2 687.0 L1320.2 688.8 L1321.2 690.6 L1322.2 692.3 L1323.2 694.1 L1324.2 695.9 L1325.2 697.6 L1326.2 699.4 L1327.2 701.1 L1328.2 702.8 L1329.2 704.5 L1330.2 706.1 L1331.2 707.8 L1332.2 709.4 L1333.2 711.0 L1334.2 712.5 L1335.2 714.0 L1336.2 715.5 L1337.2 716.9 L1338.2 718.3 L1339.2 719.6 L1340.2 720.9 L1341.2 722.2 L1342.2 723.4 L1343.2 724.6 L1344.2 725.7 L1345.2 726.7 L1346.2 727.8 L1347.2 728.7 L1348.2 729.7 L1349.2 730.5 L1350.2 731.3 L1351.2 732.1 L1352.2 732.8 L1353.2 733.4 L1354.2 734.0 L1355.2 734.5 L1356.2 735.0 L1357.2 735.4 L1358.2 735.7 L1359.2 736.0 L1360.2 736.2 L1361.2 736.3 L1362.2 736.4 L1363.2 736.4 L1364.2 736.4 L1365.2 736.3 L1366.2 736.1 L1367.2 735.8 L1368.2 735.5 L1369.2 735.1 L1370.2 734.7 L1371.2 734.2 L1372.2 733.6 L1373.2 733.0 L1374.2 732.3 L1375.2 731.5 L1376.2 730.7 L1377.2 729.8 L1378.2 728.9 L1379.2 727.9 L1380.2 726.8 L1381.2 725.7 L1382.2 724.5 L1383.2 723.3 L1384.2 722.0 L1385.2 720.6 L1386.2 719.2 L1387.2 717.7 L1388.2 716.2 L1389.2 714.6 L1390.2 713.0 L1391.2 711.3 L1392.2 709.5 L1393.2 707.8 L1394.2 706.0 L1395.2 704.2 L1396.2 702.5 L1397.2 700.8 L1398.2 699.1 L1399.2 697.5 L1400.2 696.0 L1401.2 694.5 L1402.2 693.2 L1403.2 692.0 L1404.2 690.9 L1405.2 690.0 L1406.2 689.2 L1407.2 688.6 L1408.2 688.2 L1409.2 687.9 L1410.2 687.7 L1411.2 687.6 L1412.2 687.7 L1413.2 687.8 L1414.2 688.1 L1415.2 688.4 L1416.2 688.8 L1417.2 689.3 L1418.2 689.8 L1419.2 690.4 L1420.2 691.0 L1421.2 691.7 L1422.2 692.4 L1423.2 693.2 L1424.2 693.9 L1425.2 694.8 L1426.2 695.6 L1427.2 696.4 L1428.2 697.3 L1429.2 698.1 L1430.2 698.9 L1431.2 699.8 L1432.2 700.6 L1433.2 701.3 L1434.2 702.1 L1435.2 702.8 L1436.2 703.5 L1437.2 704.1 L1438.2 704.7 L1439.2 705.2 L1440.2 705.7 L1441.2 706.1 L1442.2 706.4 L1443.2 706.6 L1444.2 706.7 L1445.2 706.8 L1446.2 706.7 L1447.2 706.6 L1448.2 706.3 L1449.2 706.0 L1450.2 705.5 L1451.2 705.0 L1452.2 704.3 L1453.2 703.6 L1454.2 702.8 L1455.2 702.0 L1456.2 701.1 L1457.2 700.1 L1458.2 699.0 L1459.2 697.9 L1460.2 696.8 L1461.2 695.5 L1462.2 694.3 L1463.2 693.0 L1464.2 691.7 L1465.2 690.4 L1466.2 689.0 L1467.2 687.6 L1468.2 686.2 L1469.2 684.8 L1470.2 683.4 L1471.2 681.9 L1472.2 680.5 L1473.2 679.1 L1474.2 677.7 L1475.2 676.3 L1476.2 674.9 L1477.2 673.6 L1478.2 672.3 L1479.2 671.0 L1480.2 669.7 L1481.2 668.5 L1482.2 667.4 L1483.2 666.3 L1484.2 665.2 L1484.2 831.5Z" fill="#fdc91d"/><path d="M420.2 831.5 L420.2 786.0 L421.2 780.8 L422.2 775.7 L423.2 770.8 L424.2 766.0 L425.2 761.3 L426.2 756.6 L427.2 752.1 L428.2 747.7 L429.2 743.5 L430.2 739.4 L431.2 735.5 L432.2 731.8 L433.2 728.1 L434.2 724.4 L435.2 720.7 L436.2 716.9 L437.2 713.1 L438.2 709.2 L439.2 705.6 L440.2 702.1 L441.2 699.0 L442.2 696.3 L443.2 693.7 L444.2 691.3 L445.2 689.0 L446.2 686.9 L447.2 685.0 L448.2 683.3 L449.2 681.7 L450.2 680.4 L451.2 679.1 L452.2 678.0 L453.2 677.1 L454.2 676.3 L455.2 675.7 L456.2 675.1 L457.2 674.7 L458.2 674.4 L459.2 674.2 L460.2 674.2 L461.2 674.2 L462.2 674.3 L463.2 674.5 L464.2 674.8 L465.2 675.2 L466.2 675.6 L467.2 676.2 L468.2 676.7 L469.2 677.4 L470.2 678.1 L471.2 678.8 L472.2 679.6 L473.2 680.4 L474.2 681.3 L475.2 682.2 L476.2 683.2 L477.2 684.1 L478.2 685.2 L479.2 686.2 L480.2 687.3 L481.2 688.4 L482.2 689.5 L483.2 690.6 L484.2 691.7 L485.2 692.9 L486.2 694.0 L487.2 695.2 L488.2 696.4 L489.2 697.6 L490.2 698.7 L491.2 699.9 L492.2 701.0 L493.2 702.2 L494.2 703.3 L495.2 704.4 L496.2 705.5 L497.2 706.6 L498.2 707.6 L499.2 708.7 L500.2 709.7 L501.2 710.6 L502.2 711.5 L503.2 712.4 L504.2 713.3 L505.2 714.1 L506.2 714.8 L507.2 715.5 L508.2 716.2 L509.2 716.8 L510.2 717.3 L511.2 717.8 L512.2 718.2 L513.2 718.5 L514.2 718.8 L515.2 719.0 L516.2 719.2 L517.2 719.3 L518.2 719.3 L519.2 719.2 L520.2 719.1 L521.2 718.9 L522.2 718.6 L523.2 718.3 L524.2 717.8 L525.2 717.3 L526.2 716.8 L527.2 716.1 L528.2 715.4 L529.2 714.6 L530.2 713.7 L531.2 712.8 L532.2 711.7 L533.2 710.6 L534.2 709.4 L535.2 708.1 L536.2 706.8 L537.2 705.4 L538.2 704.0 L539.2 702.5 L540.2 701.1 L541.2 699.6 L542.2 698.1 L543.2 696.6 L544.2 695.1 L545.2 693.6 L546.2 692.2 L547.2 690.8 L548.2 689.4 L549.2 688.0 L550.2 686.7 L551.2 685.4 L552.2 684.2 L553.2 683.0 L554.2 681.9 L555.2 680.8 L556.2 679.8 L557.2 678.8 L558.2 678.0 L559.2 677.2 L560.2 676.5 L561.2 675.8 L562.2 675.3 L563.2 674.9 L564.2 674.5 L565.2 674.2 L566.2 674.0 L567.2 673.9 L568.2 673.9 L569.2 673.9 L570.2 674.1 L571.2 674.3 L572.2 674.6 L573.2 675.0 L574.2 675.4 L575.2 676.0 L576.2 676.6 L577.2 677.3 L578.2 678.1 L579.2 679.0 L580.2 680.0 L581.2 681.0 L582.2 682.1 L583.2 683.3 L584.2 684.5 L585.2 685.8 L586.2 687.2 L587.2 688.6 L588.2 690.1 L589.2 691.6 L590.2 693.1 L591.2 694.7 L592.2 696.3 L593.2 698.0 L594.2 699.7 L595.2 701.4 L596.2 703.1 L597.2 704.8 L598.2 706.6 L599.2 708.3 L600.2 710.1 L601.2 711.9 L602.2 713.6 L603.2 715.4 L604.2 717.1 L605.2 718.9 L606.2 720.6 L607.2 722.3 L608.2 723.9 L609.2 725.6 L610.2 727.2 L611.2 728.7 L612.2 730.3 L613.2 731.8 L614.2 733.2 L615.2 734.7 L616.2 736.0 L617.2 737.4 L618.2 738.7 L619.2 739.9 L620.2 741.1 L621.2 742.3 L622.2 743.4 L623.2 744.4 L624.2 745.4 L625.2 746.4 L626.2 747.2 L627.2 748.0 L628.2 748.8 L629.2 749.5 L630.2 750.1 L631.2 750.6 L632.2 751.1 L633.2 751.5 L634.2 751.8 L635.2 752.0 L636.2 752.2 L637.2 752.3 L638.2 752.3 L639.2 752.2 L640.2 752.0 L641.2 751.8 L642.2 751.4 L643.2 751.0 L644.2 750.5 L645.2 749.8 L646.2 749.1 L647.2 748.3 L648.2 747.4 L649.2 746.4 L650.2 745.4 L651.2 744.3 L652.2 743.1 L653.2 741.9 L654.2 740.6 L655.2 739.3 L656.2 737.9 L657.2 736.4 L658.2 735.0 L659.2 733.4 L660.2 731.9 L661.2 730.3 L662.2 728.7 L663.2 727.1 L664.2 725.5 L665.2 723.9 L666.2 722.2 L667.2 720.6 L668.2 719.0 L669.2 717.3 L670.2 715.7 L671.2 714.1 L672.2 712.5 L673.2 710.9 L674.2 709.4 L675.2 707.9 L676.2 706.4 L677.2 705.0 L678.2 703.5 L679.2 702.1 L680.2 700.8 L681.2 699.5 L682.2 698.2 L683.2 696.9 L684.2 695.6 L685.2 694.4 L686.2 693.3 L687.2 692.1 L688.2 691.0 L689.2 689.9 L690.2 688.8 L691.2 687.7 L692.2 686.7 L693.2 685.7 L694.2 684.8 L695.2 683.8 L696.2 682.9 L697.2 682.0 L698.2 681.2 L699.2 680.3 L700.2 679.5 L701.2 678.7 L702.2 678.0 L703.2 677.2 L704.2 676.5 L705.2 675.8 L706.2 675.2 L707.2 674.5 L708.2 673.9 L709.2 673.3 L710.2 672.7 L711.2 672.2 L712.2 671.7 L713.2 671.2 L714.2 670.7 L715.2 670.2 L716.2 669.8 L717.2 669.4 L718.2 669.0 L719.2 668.6 L720.2 668.2 L721.2 667.9 L722.2 667.6 L723.2 667.3 L724.2 667.0 L725.2 666.8 L726.2 666.6 L727.2 666.3 L728.2 666.2 L729.2 666.0 L730.2 665.8 L731.2 665.7 L732.2 665.6 L733.2 665.5 L734.2 665.4 L735.2 665.3 L736.2 665.3 L737.2 665.2 L738.2 665.2 L739.2 665.2 L740.2 665.2 L741.2 665.3 L742.2 665.3 L743.2 665.4 L744.2 665.5 L745.2 665.6 L746.2 665.7 L747.2 665.8 L748.2 666.0 L749.2 666.1 L750.2 666.3 L751.2 666.5 L752.2 666.7 L753.2 666.9 L754.2 667.1 L755.2 667.4 L756.2 667.7 L757.2 667.9 L758.2 668.2 L759.2 668.5 L760.2 668.8 L761.2 669.2 L762.2 669.5 L763.2 669.9 L764.2 670.3 L765.2 670.6 L766.2 671.1 L767.2 671.5 L768.2 671.9 L769.2 672.3 L770.2 672.8 L771.2 673.3 L772.2 673.7 L773.2 674.2 L774.2 674.8 L775.2 675.3 L776.2 675.8 L777.2 676.4 L778.2 676.9 L779.2 677.5 L780.2 678.1 L781.2 678.7 L782.2 679.3 L783.2 679.9 L784.2 680.5 L785.2 681.2 L786.2 681.8 L787.2 682.5 L788.2 683.2 L789.2 683.9 L790.2 684.6 L791.2 685.3 L792.2 686.0 L793.2 686.8 L794.2 687.5 L795.2 688.3 L796.2 689.1 L797.2 689.9 L798.2 690.7 L799.2 691.5 L800.2 692.3 L801.2 693.1 L802.2 694.0 L803.2 694.8 L804.2 695.7 L805.2 696.5 L806.2 697.4 L807.2 698.3 L808.2 699.2 L809.2 700.1 L810.2 701.0 L811.2 702.0 L812.2 702.9 L813.2 703.9 L814.2 704.8 L815.2 705.8 L816.2 706.8 L817.2 707.8 L818.2 708.8 L819.2 709.8 L820.2 710.8 L821.2 711.8 L822.2 712.9 L823.2 713.9 L824.2 715.0 L825.2 716.0 L826.2 717.1 L827.2 718.2 L828.2 719.2 L829.2 720.3 L830.2 721.3 L831.2 722.3 L832.2 723.3 L833.2 724.3 L834.2 725.3 L835.2 726.2 L836.2 727.2 L837.2 728.0 L838.2 728.9 L839.2 729.7 L840.2 730.4 L841.2 731.1 L842.2 731.8 L843.2 732.4 L844.2 732.9 L845.2 733.4 L846.2 733.8 L847.2 734.2 L848.2 734.5 L849.2 734.7 L850.2 734.8 L851.2 734.9 L852.2 734.8 L853.2 734.7 L854.2 734.5 L855.2 734.2 L856.2 733.8 L857.2 733.3 L858.2 732.6 L859.2 731.9 L860.2 731.1 L861.2 730.3 L862.2 729.3 L863.2 728.3 L864.2 727.2 L865.2 726.0 L866.2 724.8 L867.2 723.5 L868.2 722.1 L869.2 720.7 L870.2 719.3 L871.2 717.8 L872.2 716.4 L873.2 714.8 L874.2 713.3 L875.2 711.7 L876.2 710.2 L877.2 708.6 L878.2 707.1 L879.2 705.5 L880.2 703.9 L881.2 702.4 L882.2 700.9 L883.2 699.4 L884.2 697.9 L885.2 696.5 L886.2 695.1 L887.2 693.8 L888.2 692.5 L889.2 691.2 L890.2 690.0 L891.2 688.8 L892.2 687.7 L893.2 686.6 L894.2 685.5 L895.2 684.5 L896.2 683.5 L897.2 682.6 L898.2 681.7 L899.2 680.8 L900.2 680.0 L901.2 679.2 L902.2 678.5 L903.2 677.8 L904.2 677.1 L905.2 676.5 L906.2 675.9 L907.2 675.4 L908.2 674.9 L909.2 674.5 L910.2 674.1 L911.2 673.7 L912.2 673.4 L913.2 673.1 L914.2 672.9 L915.2 672.7 L916.2 672.5 L917.2 672.4 L918.2 672.4 L919.2 672.4 L920.2 672.4 L921.2 672.4 L922.2 672.5 L923.2 672.7 L924.2 672.9 L925.2 673.1 L926.2 673.4 L927.2 673.7 L928.2 674.1 L929.2 674.5 L930.2 675.0 L931.2 675.5 L932.2 676.0 L933.2 676.6 L934.2 677.2 L935.2 677.9 L936.2 678.6 L937.2 679.4 L938.2 680.2 L939.2 681.0 L940.2 681.9 L941.2 682.9 L942.2 683.8 L943.2 684.9 L944.2 686.0 L945.2 687.1 L946.2 688.2 L947.2 689.5 L948.2 690.7 L949.2 692.0 L950.2 693.3 L951.2 694.7 L952.2 696.1 L953.2 697.5 L954.2 699.0 L955.2 700.5 L956.2 701.9 L957.2 703.4 L958.2 704.9 L959.2 706.4 L960.2 707.9 L961.2 709.4 L962.2 710.9 L963.2 712.4 L964.2 713.8 L965.2 715.3 L966.2 716.7 L967.2 718.0 L968.2 719.4 L969.2 720.7 L970.2 721.9 L971.2 723.1 L972.2 724.3 L973.2 725.4 L974.2 726.5 L975.2 727.4 L976.2 728.4 L977.2 729.2 L978.2 730.0 L979.2 730.7 L980.2 731.3 L981.2 731.8 L982.2 732.2 L983.2 732.6 L984.2 732.8 L985.2 733.0 L986.2 733.1 L987.2 733.1 L988.2 733.0 L989.2 732.8 L990.2 732.6 L991.2 732.3 L992.2 731.9 L993.2 731.5 L994.2 731.0 L995.2 730.5 L996.2 729.9 L997.2 729.3 L998.2 728.6 L999.2 727.9 L1000.2 727.2 L1001.2 726.4 L1002.2 725.6 L1003.2 724.8 L1004.2 724.0 L1005.2 723.2 L1006.2 722.3 L1007.2 721.4 L1008.2 720.6 L1009.2 719.7 L1010.2 718.9 L1011.2 718.0 L1012.2 717.2 L1013.2 716.3 L1014.2 715.5 L1015.2 714.8 L1016.2 714.0 L1017.2 713.3 L1018.2 712.5 L1019.2 711.8 L1020.2 711.2 L1021.2 710.5 L1022.2 709.9 L1023.2 709.3 L1024.2 708.7 L1025.2 708.2 L1026.2 707.7 L1027.2 707.2 L1028.2 706.7 L1029.2 706.3 L1030.2 705.9 L1031.2 705.5 L1032.2 705.2 L1033.2 704.8 L1034.2 704.6 L1035.2 704.3 L1036.2 704.1 L1037.2 703.9 L1038.2 703.7 L1039.2 703.6 L1040.2 703.5 L1041.2 703.4 L1042.2 703.4 L1043.2 703.4 L1044.2 703.4 L1045.2 703.5 L1046.2 703.6 L1047.2 703.7 L1048.2 703.9 L1049.2 704.1 L1050.2 704.3 L1051.2 704.6 L1052.2 705.0 L1053.2 705.3 L1054.2 705.7 L1055.2 706.2 L1056.2 706.6 L1057.2 707.2 L1058.2 707.7 L1059.2 708.3 L1060.2 709.0 L1061.2 709.6 L1062.2 710.4 L1063.2 711.1 L1064.2 711.9 L1065.2 712.8 L1066.2 713.7 L1067.2 714.6 L1068.2 715.6 L1069.2 716.6 L1070.2 717.7 L1071.2 718.8 L1072.2 719.9 L1073.2 721.0 L1074.2 722.1 L1075.2 723.3 L1076.2 724.5 L1077.2 725.6 L1078.2 726.8 L1079.2 728.0 L1080.2 729.2 L1081.2 730.4 L1082.2 731.5 L1083.2 732.7 L1084.2 733.8 L1085.2 735.0 L1086.2 736.1 L1087.2 737.2 L1088.2 738.2 L1089.2 739.2 L1090.2 740.2 L1091.2 741.1 L1092.2 742.0 L1093.2 742.9 L1094.2 743.7 L1095.2 744.5 L1096.2 745.2 L1097.2 745.8 L1098.2 746.4 L1099.2 746.9 L1100.2 747.3 L1101.2 747.7 L1102.2 748.0 L1103.2 748.3 L1104.2 748.5 L1105.2 748.6 L1106.2 748.6 L1107.2 748.6 L1108.2 748.5 L1109.2 748.4 L1110.2 748.1 L1111.2 747.8 L1112.2 747.4 L1113.2 747.0 L1114.2 746.4 L1115.2 745.8 L1116.2 745.1 L1117.2 744.3 L1118.2 743.4 L1119.2 742.5 L1120.2 741.4 L1121.2 740.3 L1122.2 739.1 L1123.2 737.9 L1124.2 736.5 L1125.2 735.1 L1126.2 733.7 L1127.2 732.1 L1128.2 730.6 L1129.2 728.9 L1130.2 727.3 L1131.2 725.6 L1132.2 723.8 L1133.2 722.0 L1134.2 720.2 L1135.2 718.3 L1136.2 716.4 L1137.2 714.5 L1138.2 712.6 L1139.2 710.7 L1140.2 708.7 L1141.2 706.8 L1142.2 704.8 L1143.2 702.8 L1144.2 700.9 L1145.2 698.9 L1146.2 696.9 L1147.2 695.0 L1148.2 693.0 L1149.2 691.1 L1150.2 689.2 L1151.2 687.3 L1152.2 685.4 L1153.2 683.6 L1154.2 681.7 L1155.2 679.9 L1156.2 678.2 L1157.2 676.4 L1158.2 674.7 L1159.2 673.0 L1160.2 671.4 L1161.2 669.8 L1162.2 668.2 L1163.2 666.7 L1164.2 665.3 L1165.2 663.9 L1166.2 662.5 L1167.2 661.2 L1168.2 660.0 L1169.2 658.8 L1170.2 657.6 L1171.2 656.6 L1172.2 655.6 L1173.2 654.7 L1174.2 653.8 L1175.2 653.0 L1176.2 652.3 L1177.2 651.7 L1178.2 651.2 L1179.2 650.7 L1180.2 650.4 L1181.2 650.1 L1182.2 650.0 L1183.2 650.0 L1184.2 650.1 L1185.2 650.3 L1186.2 650.6 L1187.2 651.0 L1188.2 651.6 L1189.2 652.4 L1190.2 653.3 L1191.2 654.3 L1192.2 655.5 L1193.2 656.8 L1194.2 658.3 L1195.2 659.8 L1196.2 661.5 L1197.2 663.3 L1198.2 665.2 L1199.2 667.1 L1200.2 669.1 L1201.2 671.2 L1202.2 673.3 L1203.2 675.4 L1204.2 677.5 L1205.2 679.7 L1206.2 681.8 L1207.2 683.9 L1208.2 686.0 L1209.2 688.0 L1210.2 690.0 L1211.2 692.0 L1212.2 693.8 L1213.2 695.6 L1214.2 697.3 L1215.2 698.8 L1216.2 700.3 L1217.2 701.6 L1218.2 702.8 L1219.2 703.8 L1220.2 704.6 L1221.2 705.3 L1222.2 705.8 L1223.2 706.1 L1224.2 706.2 L1225.2 706.1 L1226.2 705.7 L1227.2 705.2 L1228.2 704.4 L1229.2 703.5 L1230.2 702.3 L1231.2 701.0 L1232.2 699.5 L1233.2 697.9 L1234.2 696.2 L1235.2 694.3 L1236.2 692.3 L1237.2 690.2 L1238.2 688.0 L1239.2 685.7 L1240.2 683.4 L1241.2 681.0 L1242.2 678.5 L1243.2 676.1 L1244.2 673.6 L1245.2 671.0 L1246.2 668.5 L1247.2 666.0 L1248.2 663.5 L1249.2 661.0 L1250.2 658.6 L1251.2 656.3 L1252.2 654.0 L1253.2 651.7 L1254.2 649.6 L1255.2 647.6 L1256.2 645.6 L1257.2 643.8 L1258.2 642.1 L1259.2 640.6 L1260.2 639.2 L1261.2 637.9 L1262.2 636.8 L1263.2 635.7 L1264.2 634.8 L1265.2 634.0 L1266.2 633.3 L1267.2 632.7 L1268.2 632.2 L1269.2 631.8 L1270.2 631.5 L1271.2 631.3 L1272.2 631.1 L1273.2 631.0 L1274.2 631.0 L1275.2 631.1 L1276.2 631.2 L1277.2 631.4 L1278.2 631.7 L1279.2 632.0 L1280.2 632.4 L1281.2 632.8 L1282.2 633.3 L1283.2 633.9 L1284.2 634.5 L1285.2 635.2 L1286.2 636.0 L1287.2 636.8 L1288.2 637.7 L1289.2 638.6 L1290.2 639.7 L1291.2 640.8 L1292.2 641.9 L1293.2 643.2 L1294.2 644.4 L1295.2 645.8 L1296.2 647.2 L1297.2 648.6 L1298.2 650.1 L1299.2 651.7 L1300.2 653.3 L1301.2 654.9 L1302.2 656.6 L1303.2 658.3 L1304.2 660.1 L1305.2 661.9 L1306.2 663.7 L1307.2 665.6 L1308.2 667.5 L1309.2 669.4 L1310.2 671.4 L1311.2 673.4 L1312.2 675.4 L1313.2 677.5 L1314.2 679.5 L1315.2 681.6 L1316.2 683.7 L1317.2 685.8 L1318.2 688.0 L1319.2 690.1 L1320.2 692.3 L1321.2 694.4 L1322.2 696.6 L1323.2 698.8 L1324.2 701.0 L1325.2 703.1 L1326.2 705.3 L1327.2 707.5 L1328.2 709.6 L1329.2 711.7 L1330.2 713.8 L1331.2 715.9 L1332.2 718.0 L1333.2 720.0 L1334.2 722.0 L1335.2 724.0 L1336.2 725.9 L1337.2 727.8 L1338.2 729.6 L1339.2 731.4 L1340.2 733.1 L1341.2 734.8 L1342.2 736.4 L1343.2 737.9 L1344.2 739.4 L1345.2 740.8 L1346.2 742.1 L1347.2 743.4 L1348.2 744.6 L1349.2 745.7 L1350.2 746.7 L1351.2 747.6 L1352.2 748.4 L1353.2 749.1 L1354.2 749.8 L1355.2 750.4 L1356.2 750.9 L1357.2 751.3 L1358.2 751.6 L1359.2 751.8 L1360.2 752.0 L1361.2 752.1 L1362.2 752.1 L1363.2 752.1 L1364.2 751.9 L1365.2 751.7 L1366.2 751.4 L1367.2 751.1 L1368.2 750.6 L1369.2 750.1 L1370.2 749.6 L1371.2 748.9 L1372.2 748.2 L1373.2 747.5 L1374.2 746.6 L1375.2 745.7 L1376.2 744.8 L1377.2 743.7 L1378.2 742.6 L1379.2 741.5 L1380.2 740.3 L1381.2 739.0 L1382.2 737.7 L1383.2 736.3 L1384.2 734.8 L1385.2 733.3 L1386.2 731.7 L1387.2 730.1 L1388.2 728.5 L1389.2 726.7 L1390.2 725.0 L1391.2 723.1 L1392.2 721.3 L1393.2 719.4 L1394.2 717.6 L1395.2 715.7 L1396.2 713.8 L1397.2 712.0 L1398.2 710.3 L1399.2 708.6 L1400.2 707.0 L1401.2 705.5 L1402.2 704.2 L1403.2 702.9 L1404.2 701.8 L1405.2 700.8 L1406.2 700.1 L1407.2 699.4 L1408.2 699.0 L1409.2 698.7 L1410.2 698.5 L1411.2 698.5 L1412.2 698.5 L1413.2 698.6 L1414.2 698.8 L1415.2 699.1 L1416.2 699.5 L1417.2 699.9 L1418.2 700.4 L1419.2 700.9 L1420.2 701.5 L1421.2 702.1 L1422.2 702.8 L1423.2 703.5 L1424.2 704.2 L1425.2 705.0 L1426.2 705.8 L1427.2 706.6 L1428.2 707.4 L1429.2 708.2 L1430.2 709.0 L1431.2 709.8 L1432.2 710.6 L1433.2 711.3 L1434.2 712.1 L1435.2 712.8 L1436.2 713.5 L1437.2 714.1 L1438.2 714.7 L1439.2 715.3 L1440.2 715.8 L1441.2 716.3 L1442.2 716.7 L1443.2 717.0 L1444.2 717.3 L1445.2 717.5 L1446.2 717.6 L1447.2 717.6 L1448.2 717.5 L1449.2 717.4 L1450.2 717.1 L1451.2 716.8 L1452.2 716.5 L1453.2 716.1 L1454.2 715.6 L1455.2 715.0 L1456.2 714.4 L1457.2 713.8 L1458.2 713.1 L1459.2 712.4 L1460.2 711.6 L1461.2 710.8 L1462.2 710.0 L1463.2 709.1 L1464.2 708.3 L1465.2 707.4 L1466.2 706.5 L1467.2 705.6 L1468.2 704.7 L1469.2 703.8 L1470.2 702.9 L1471.2 702.0 L1472.2 701.2 L1473.2 700.3 L1474.2 699.5 L1475.2 698.7 L1476.2 697.9 L1477.2 697.2 L1478.2 696.5 L1479.2 695.9 L1480.2 695.3 L1481.2 694.7 L1482.2 694.2 L1483.2 693.8 L1484.2 693.4 L1484.2 831.5Z" fill="#0bc2b0"/><path d="M420.2 831.5 L420.2 816.5 L421.2 810.3 L422.2 804.2 L423.2 798.3 L424.2 792.4 L425.2 786.5 L426.2 780.7 L427.2 775.0 L428.2 769.7 L429.2 764.7 L430.2 760.2 L431.2 756.1 L432.2 752.3 L433.2 748.7 L434.2 745.2 L435.2 741.8 L436.2 738.5 L437.2 735.3 L438.2 732.2 L439.2 729.2 L440.2 726.3 L441.2 723.6 L442.2 721.1 L443.2 718.6 L444.2 716.3 L445.2 714.1 L446.2 712.1 L447.2 710.2 L448.2 708.5 L449.2 706.8 L450.2 705.4 L451.2 704.1 L452.2 702.9 L453.2 701.9 L454.2 701.0 L455.2 700.3 L456.2 699.8 L457.2 699.4 L458.2 699.1 L459.2 699.0 L460.2 699.1 L461.2 699.3 L462.2 699.6 L463.2 700.1 L464.2 700.7 L465.2 701.4 L466.2 702.3 L467.2 703.2 L468.2 704.3 L469.2 705.4 L470.2 706.7 L471.2 708.0 L472.2 709.4 L473.2 710.8 L474.2 712.4 L475.2 714.0 L476.2 715.6 L477.2 717.3 L478.2 719.1 L479.2 720.8 L480.2 722.6 L481.2 724.5 L482.2 726.3 L483.2 728.1 L484.2 730.0 L485.2 731.9 L486.2 733.7 L487.2 735.5 L488.2 737.3 L489.2 739.1 L490.2 740.9 L491.2 742.6 L492.2 744.3 L493.2 745.9 L494.2 747.5 L495.2 749.1 L496.2 750.6 L497.2 752.1 L498.2 753.5 L499.2 754.9 L500.2 756.2 L501.2 757.5 L502.2 758.7 L503.2 759.8 L504.2 760.9 L505.2 762.0 L506.2 763.0 L507.2 763.9 L508.2 764.7 L509.2 765.5 L510.2 766.2 L511.2 766.9 L512.2 767.5 L513.2 768.0 L514.2 768.4 L515.2 768.7 L516.2 769.0 L517.2 769.2 L518.2 769.3 L519.2 769.3 L520.2 769.2 L521.2 769.0 L522.2 768.8 L523.2 768.4 L524.2 768.0 L525.2 767.4 L526.2 766.8 L527.2 766.1 L528.2 765.3 L529.2 764.4 L530.2 763.4 L531.2 762.4 L532.2 761.3 L533.2 760.1 L534.2 758.9 L535.2 757.6 L536.2 756.2 L537.2 754.8 L538.2 753.3 L539.2 751.7 L540.2 750.1 L541.2 748.5 L542.2 746.8 L543.2 745.1 L544.2 743.3 L545.2 741.5 L546.2 739.8 L547.2 738.0 L548.2 736.3 L549.2 734.7 L550.2 733.1 L551.2 731.6 L552.2 730.3 L553.2 729.0 L554.2 727.8 L555.2 726.8 L556.2 725.8 L557.2 724.9 L558.2 724.1 L559.2 723.5 L560.2 722.9 L561.2 722.4 L562.2 722.0 L563.2 721.7 L564.2 721.4 L565.2 721.3 L566.2 721.2 L567.2 721.2 L568.2 721.3 L569.2 721.5 L570.2 721.8 L571.2 722.1 L572.2 722.5 L573.2 723.0 L574.2 723.6 L575.2 724.2 L576.2 724.9 L577.2 725.6 L578.2 726.5 L579.2 727.3 L580.2 728.3 L581.2 729.3 L582.2 730.4 L583.2 731.5 L584.2 732.6 L585.2 733.8 L586.2 735.1 L587.2 736.4 L588.2 737.7 L589.2 739.0 L590.2 740.4 L591.2 741.8 L592.2 743.2 L593.2 744.6 L594.2 746.0 L595.2 747.5 L596.2 748.9 L597.2 750.3 L598.2 751.8 L599.2 753.2 L600.2 754.6 L601.2 756.0 L602.2 757.4 L603.2 758.8 L604.2 760.1 L605.2 761.5 L606.2 762.7 L607.2 764.0 L608.2 765.2 L609.2 766.4 L610.2 767.5 L611.2 768.6 L612.2 769.6 L613.2 770.6 L614.2 771.6 L615.2 772.5 L616.2 773.3 L617.2 774.2 L618.2 775.0 L619.2 775.7 L620.2 776.4 L621.2 777.0 L622.2 777.6 L623.2 778.2 L624.2 778.7 L625.2 779.1 L626.2 779.5 L627.2 779.9 L628.2 780.2 L629.2 780.4 L630.2 780.6 L631.2 780.8 L632.2 780.8 L633.2 780.9 L634.2 780.9 L635.2 780.8 L636.2 780.7 L637.2 780.5 L638.2 780.3 L639.2 780.0 L640.2 779.7 L641.2 779.4 L642.2 779.0 L643.2 778.6 L644.2 778.2 L645.2 777.7 L646.2 777.3 L647.2 776.8 L648.2 776.3 L649.2 775.8 L650.2 775.4 L651.2 774.9 L652.2 774.4 L653.2 773.9 L654.2 773.4 L655.2 773.0 L656.2 772.5 L657.2 772.1 L658.2 771.7 L659.2 771.4 L660.2 771.0 L661.2 770.7 L662.2 770.4 L663.2 770.1 L664.2 769.8 L665.2 769.5 L666.2 769.2 L667.2 769.0 L668.2 768.7 L669.2 768.4 L670.2 768.2 L671.2 767.9 L672.2 767.6 L673.2 767.4 L674.2 767.1 L675.2 766.9 L676.2 766.6 L677.2 766.4 L678.2 766.1 L679.2 765.9 L680.2 765.6 L681.2 765.4 L682.2 765.1 L683.2 764.9 L684.2 764.7 L685.2 764.4 L686.2 764.2 L687.2 764.0 L688.2 763.7 L689.2 763.5 L690.2 763.3 L691.2 763.1 L692.2 762.9 L693.2 762.6 L694.2 762.4 L695.2 762.2 L696.2 762.0 L697.2 761.8 L698.2 761.6 L699.2 761.4 L700.2 761.2 L701.2 761.0 L702.2 760.8 L703.2 760.6 L704.2 760.4 L705.2 760.3 L706.2 760.1 L707.2 759.9 L708.2 759.7 L709.2 759.5 L710.2 759.4 L711.2 759.2 L712.2 759.0 L713.2 758.9 L714.2 758.7 L715.2 758.5 L716.2 758.4 L717.2 758.2 L718.2 758.1 L719.2 757.9 L720.2 757.8 L721.2 757.6 L722.2 757.5 L723.2 757.4 L724.2 757.2 L725.2 757.1 L726.2 757.0 L727.2 756.8 L728.2 756.7 L729.2 756.6 L730.2 756.5 L731.2 756.3 L732.2 756.2 L733.2 756.1 L734.2 756.0 L735.2 755.9 L736.2 755.8 L737.2 755.7 L738.2 755.6 L739.2 755.5 L740.2 755.4 L741.2 755.3 L742.2 755.2 L743.2 755.2 L744.2 755.1 L745.2 755.0 L746.2 754.9 L747.2 754.8 L748.2 754.8 L749.2 754.7 L750.2 754.6 L751.2 754.6 L752.2 754.5 L753.2 754.5 L754.2 754.4 L755.2 754.4 L756.2 754.3 L757.2 754.3 L758.2 754.2 L759.2 754.2 L760.2 754.2 L761.2 754.1 L762.2 754.1 L763.2 754.1 L764.2 754.0 L765.2 754.0 L766.2 754.0 L767.2 754.0 L768.2 754.0 L769.2 754.0 L770.2 754.0 L771.2 754.0 L772.2 754.0 L773.2 754.0 L774.2 754.0 L775.2 754.0 L776.2 754.0 L777.2 754.0 L778.2 754.1 L779.2 754.1 L780.2 754.1 L781.2 754.2 L782.2 754.2 L783.2 754.3 L784.2 754.3 L785.2 754.4 L786.2 754.5 L787.2 754.6 L788.2 754.7 L789.2 754.8 L790.2 754.9 L791.2 755.0 L792.2 755.1 L793.2 755.3 L794.2 755.4 L795.2 755.6 L796.2 755.7 L797.2 755.9 L798.2 756.1 L799.2 756.3 L800.2 756.5 L801.2 756.7 L802.2 756.9 L803.2 757.2 L804.2 757.4 L805.2 757.7 L806.2 758.0 L807.2 758.3 L808.2 758.6 L809.2 758.9 L810.2 759.3 L811.2 759.6 L812.2 760.0 L813.2 760.4 L814.2 760.8 L815.2 761.2 L816.2 761.6 L817.2 762.0 L818.2 762.5 L819.2 763.0 L820.2 763.5 L821.2 764.0 L822.2 764.5 L823.2 765.0 L824.2 765.5 L825.2 766.0 L826.2 766.6 L827.2 767.1 L828.2 767.6 L829.2 768.1 L830.2 768.6 L831.2 769.0 L832.2 769.5 L833.2 769.9 L834.2 770.4 L835.2 770.8 L836.2 771.1 L837.2 771.5 L838.2 771.8 L839.2 772.0 L840.2 772.3 L841.2 772.5 L842.2 772.6 L843.2 772.7 L844.2 772.8 L845.2 772.8 L846.2 772.8 L847.2 772.8 L848.2 772.7 L849.2 772.5 L850.2 772.3 L851.2 772.1 L852.2 771.8 L853.2 771.5 L854.2 771.2 L855.2 770.8 L856.2 770.3 L857.2 769.9 L858.2 769.3 L859.2 768.8 L860.2 768.2 L861.2 767.5 L862.2 766.9 L863.2 766.1 L864.2 765.4 L865.2 764.6 L866.2 763.7 L867.2 762.8 L868.2 761.9 L869.2 761.0 L870.2 760.0 L871.2 759.0 L872.2 757.9 L873.2 756.9 L874.2 755.8 L875.2 754.7 L876.2 753.6 L877.2 752.5 L878.2 751.4 L879.2 750.2 L880.2 749.1 L881.2 748.0 L882.2 746.9 L883.2 745.8 L884.2 744.6 L885.2 743.6 L886.2 742.5 L887.2 741.4 L888.2 740.4 L889.2 739.4 L890.2 738.4 L891.2 737.4 L892.2 736.5 L893.2 735.6 L894.2 734.8 L895.2 734.0 L896.2 733.2 L897.2 732.5 L898.2 731.8 L899.2 731.1 L900.2 730.5 L901.2 729.9 L902.2 729.4 L903.2 728.9 L904.2 728.4 L905.2 728.0 L906.2 727.6 L907.2 727.2 L908.2 726.9 L909.2 726.6 L910.2 726.3 L911.2 726.1 L912.2 725.9 L913.2 725.7 L914.2 725.6 L915.2 725.5 L916.2 725.4 L917.2 725.4 L918.2 725.4 L919.2 725.4 L920.2 725.5 L921.2 725.5 L922.2 725.7 L923.2 725.8 L924.2 726.0 L925.2 726.2 L926.2 726.4 L927.2 726.7 L928.2 727.0 L929.2 727.3 L930.2 727.6 L931.2 728.0 L932.2 728.4 L933.2 728.8 L934.2 729.3 L935.2 729.8 L936.2 730.3 L937.2 730.8 L938.2 731.3 L939.2 731.9 L940.2 732.5 L941.2 733.1 L942.2 733.8 L943.2 734.5 L944.2 735.2 L945.2 735.9 L946.2 736.6 L947.2 737.4 L948.2 738.2 L949.2 739.0 L950.2 739.8 L951.2 740.6 L952.2 741.5 L953.2 742.3 L954.2 743.2 L955.2 744.1 L956.2 744.9 L957.2 745.8 L958.2 746.7 L959.2 747.5 L960.2 748.4 L961.2 749.2 L962.2 750.0 L963.2 750.8 L964.2 751.6 L965.2 752.4 L966.2 753.1 L967.2 753.8 L968.2 754.5 L969.2 755.1 L970.2 755.8 L971.2 756.3 L972.2 756.9 L973.2 757.3 L974.2 757.8 L975.2 758.2 L976.2 758.5 L977.2 758.8 L978.2 759.1 L979.2 759.3 L980.2 759.5 L981.2 759.6 L982.2 759.7 L983.2 759.7 L984.2 759.7 L985.2 759.6 L986.2 759.5 L987.2 759.4 L988.2 759.2 L989.2 759.0 L990.2 758.8 L991.2 758.5 L992.2 758.2 L993.2 757.8 L994.2 757.4 L995.2 757.0 L996.2 756.5 L997.2 756.0 L998.2 755.4 L999.2 754.9 L1000.2 754.3 L1001.2 753.6 L1002.2 752.9 L1003.2 752.2 L1004.2 751.5 L1005.2 750.7 L1006.2 750.0 L1007.2 749.2 L1008.2 748.4 L1009.2 747.6 L1010.2 746.7 L1011.2 745.9 L1012.2 745.0 L1013.2 744.2 L1014.2 743.3 L1015.2 742.5 L1016.2 741.6 L1017.2 740.8 L1018.2 739.9 L1019.2 739.1 L1020.2 738.3 L1021.2 737.5 L1022.2 736.7 L1023.2 735.9 L1024.2 735.1 L1025.2 734.4 L1026.2 733.7 L1027.2 733.1 L1028.2 732.4 L1029.2 731.8 L1030.2 731.2 L1031.2 730.7 L1032.2 730.2 L1033.2 729.8 L1034.2 729.4 L1035.2 729.0 L1036.2 728.7 L1037.2 728.4 L1038.2 728.2 L1039.2 728.1 L1040.2 728.0 L1041.2 728.0 L1042.2 728.0 L1043.2 728.1 L1044.2 728.3 L1045.2 728.5 L1046.2 728.8 L1047.2 729.1 L1048.2 729.5 L1049.2 729.9 L1050.2 730.4 L1051.2 730.9 L1052.2 731.5 L1053.2 732.1 L1054.2 732.7 L1055.2 733.4 L1056.2 734.1 L1057.2 734.9 L1058.2 735.7 L1059.2 736.5 L1060.2 737.3 L1061.2 738.2 L1062.2 739.1 L1063.2 740.0 L1064.2 741.0 L1065.2 742.0 L1066.2 742.9 L1067.2 743.9 L1068.2 745.0 L1069.2 746.0 L1070.2 747.0 L1071.2 748.1 L1072.2 749.1 L1073.2 750.2 L1074.2 751.3 L1075.2 752.3 L1076.2 753.4 L1077.2 754.4 L1078.2 755.5 L1079.2 756.5 L1080.2 757.6 L1081.2 758.6 L1082.2 759.6 L1083.2 760.6 L1084.2 761.6 L1085.2 762.6 L1086.2 763.5 L1087.2 764.4 L1088.2 765.3 L1089.2 766.2 L1090.2 767.1 L1091.2 767.9 L1092.2 768.7 L1093.2 769.4 L1094.2 770.1 L1095.2 770.8 L1096.2 771.4 L1097.2 772.0 L1098.2 772.5 L1099.2 773.0 L1100.2 773.5 L1101.2 773.9 L1102.2 774.2 L1103.2 774.5 L1104.2 774.7 L1105.2 774.9 L1106.2 775.0 L1107.2 775.0 L1108.2 775.0 L1109.2 775.0 L1110.2 774.8 L1111.2 774.6 L1112.2 774.3 L1113.2 774.0 L1114.2 773.6 L1115.2 773.2 L1116.2 772.7 L1117.2 772.2 L1118.2 771.7 L1119.2 771.0 L1120.2 770.4 L1121.2 769.7 L1122.2 769.0 L1123.2 768.2 L1124.2 767.4 L1125.2 766.6 L1126.2 765.7 L1127.2 764.8 L1128.2 763.9 L1129.2 763.0 L1130.2 762.0 L1131.2 761.0 L1132.2 760.1 L1133.2 759.0 L1134.2 758.0 L1135.2 757.0 L1136.2 756.0 L1137.2 754.9 L1138.2 753.9 L1139.2 752.8 L1140.2 751.8 L1141.2 750.7 L1142.2 749.7 L1143.2 748.6 L1144.2 747.6 L1145.2 746.6 L1146.2 745.5 L1147.2 744.5 L1148.2 743.5 L1149.2 742.5 L1150.2 741.6 L1151.2 740.6 L1152.2 739.7 L1153.2 738.7 L1154.2 737.8 L1155.2 736.9 L1156.2 736.0 L1157.2 735.2 L1158.2 734.3 L1159.2 733.5 L1160.2 732.7 L1161.2 731.9 L1162.2 731.2 L1163.2 730.4 L1164.2 729.7 L1165.2 729.1 L1166.2 728.4 L1167.2 727.8 L1168.2 727.2 L1169.2 726.7 L1170.2 726.1 L1171.2 725.6 L1172.2 725.2 L1173.2 724.8 L1174.2 724.4 L1175.2 724.0 L1176.2 723.7 L1177.2 723.4 L1178.2 723.2 L1179.2 723.0 L1180.2 722.8 L1181.2 722.7 L1182.2 722.6 L1183.2 722.5 L1184.2 722.5 L1185.2 722.5 L1186.2 722.5 L1187.2 722.5 L1188.2 722.6 L1189.2 722.7 L1190.2 722.8 L1191.2 722.9 L1192.2 723.1 L1193.2 723.3 L1194.2 723.5 L1195.2 723.7 L1196.2 723.9 L1197.2 724.2 L1198.2 724.4 L1199.2 724.7 L1200.2 725.0 L1201.2 725.3 L1202.2 725.7 L1203.2 726.0 L1204.2 726.3 L1205.2 726.7 L1206.2 727.0 L1207.2 727.4 L1208.2 727.7 L1209.2 728.1 L1210.2 728.4 L1211.2 728.8 L1212.2 729.1 L1213.2 729.4 L1214.2 729.7 L1215.2 730.1 L1216.2 730.3 L1217.2 730.6 L1218.2 730.9 L1219.2 731.1 L1220.2 731.3 L1221.2 731.5 L1222.2 731.7 L1223.2 731.9 L1224.2 732.0 L1225.2 732.1 L1226.2 732.1 L1227.2 732.2 L1228.2 732.2 L1229.2 732.1 L1230.2 732.0 L1231.2 731.9 L1232.2 731.7 L1233.2 731.5 L1234.2 731.3 L1235.2 730.9 L1236.2 730.6 L1237.2 730.2 L1238.2 729.8 L1239.2 729.3 L1240.2 728.8 L1241.2 728.3 L1242.2 727.7 L1243.2 727.2 L1244.2 726.6 L1245.2 726.1 L1246.2 725.5 L1247.2 725.0 L1248.2 724.4 L1249.2 723.9 L1250.2 723.5 L1251.2 723.0 L1252.2 722.6 L1253.2 722.2 L1254.2 721.9 L1255.2 721.6 L1256.2 721.4 L1257.2 721.2 L1258.2 721.1 L1259.2 721.1 L1260.2 721.2 L1261.2 721.3 L1262.2 721.4 L1263.2 721.7 L1264.2 721.9 L1265.2 722.2 L1266.2 722.6 L1267.2 723.0 L1268.2 723.4 L1269.2 723.8 L1270.2 724.3 L1271.2 724.8 L1272.2 725.3 L1273.2 725.8 L1274.2 726.3 L1275.2 726.8 L1276.2 727.3 L1277.2 727.8 L1278.2 728.3 L1279.2 728.7 L1280.2 729.2 L1281.2 729.7 L1282.2 730.1 L1283.2 730.6 L1284.2 731.0 L1285.2 731.4 L1286.2 731.9 L1287.2 732.3 L1288.2 732.7 L1289.2 733.1 L1290.2 733.6 L1291.2 734.0 L1292.2 734.4 L1293.2 734.8 L1294.2 735.3 L1295.2 735.7 L1296.2 736.2 L1297.2 736.6 L1298.2 737.1 L1299.2 737.5 L1300.2 738.0 L1301.2 738.5 L1302.2 739.0 L1303.2 739.5 L1304.2 740.0 L1305.2 740.6 L1306.2 741.1 L1307.2 741.7 L1308.2 742.3 L1309.2 742.9 L1310.2 743.5 L1311.2 744.1 L1312.2 744.8 L1313.2 745.5 L1314.2 746.2 L1315.2 746.9 L1316.2 747.7 L1317.2 748.5 L1318.2 749.3 L1319.2 750.1 L1320.2 751.0 L1321.2 751.8 L1322.2 752.8 L1323.2 753.7 L1324.2 754.7 L1325.2 755.7 L1326.2 756.7 L1327.2 757.8 L1328.2 758.8 L1329.2 759.9 L1330.2 761.0 L1331.2 762.0 L1332.2 763.1 L1333.2 764.2 L1334.2 765.3 L1335.2 766.3 L1336.2 767.4 L1337.2 768.4 L1338.2 769.4 L1339.2 770.4 L1340.2 771.4 L1341.2 772.3 L1342.2 773.2 L1343.2 774.1 L1344.2 774.9 L1345.2 775.7 L1346.2 776.5 L1347.2 777.2 L1348.2 777.8 L1349.2 778.4 L1350.2 778.9 L1351.2 779.4 L1352.2 779.8 L1353.2 780.2 L1354.2 780.5 L1355.2 780.8 L1356.2 781.0 L1357.2 781.1 L1358.2 781.2 L1359.2 781.2 L1360.2 781.2 L1361.2 781.2 L1362.2 781.0 L1363.2 780.9 L1364.2 780.7 L1365.2 780.4 L1366.2 780.1 L1367.2 779.8 L1368.2 779.4 L1369.2 778.9 L1370.2 778.4 L1371.2 777.9 L1372.2 777.4 L1373.2 776.8 L1374.2 776.1 L1375.2 775.4 L1376.2 774.7 L1377.2 773.9 L1378.2 773.1 L1379.2 772.3 L1380.2 771.4 L1381.2 770.5 L1382.2 769.6 L1383.2 768.6 L1384.2 767.6 L1385.2 766.6 L1386.2 765.5 L1387.2 764.5 L1388.2 763.4 L1389.2 762.3 L1390.2 761.2 L1391.2 760.1 L1392.2 759.0 L1393.2 757.9 L1394.2 756.9 L1395.2 755.8 L1396.2 754.7 L1397.2 753.7 L1398.2 752.7 L1399.2 751.7 L1400.2 750.7 L1401.2 749.8 L1402.2 748.9 L1403.2 748.0 L1404.2 747.2 L1405.2 746.4 L1406.2 745.6 L1407.2 745.0 L1408.2 744.3 L1409.2 743.8 L1410.2 743.2 L1411.2 742.8 L1412.2 742.4 L1413.2 742.1 L1414.2 741.8 L1415.2 741.6 L1416.2 741.4 L1417.2 741.3 L1418.2 741.2 L1419.2 741.2 L1420.2 741.2 L1421.2 741.2 L1422.2 741.3 L1423.2 741.4 L1424.2 741.5 L1425.2 741.6 L1426.2 741.8 L1427.2 742.0 L1428.2 742.2 L1429.2 742.4 L1430.2 742.6 L1431.2 742.8 L1432.2 743.0 L1433.2 743.2 L1434.2 743.4 L1435.2 743.6 L1436.2 743.8 L1437.2 743.9 L1438.2 744.1 L1439.2 744.2 L1440.2 744.3 L1441.2 744.4 L1442.2 744.5 L1443.2 744.5 L1444.2 744.5 L1445.2 744.4 L1446.2 744.3 L1447.2 744.2 L1448.2 744.0 L1449.2 743.7 L1450.2 743.4 L1451.2 743.1 L1452.2 742.7 L1453.2 742.3 L1454.2 741.8 L1455.2 741.3 L1456.2 740.7 L1457.2 740.1 L1458.2 739.5 L1459.2 738.9 L1460.2 738.2 L1461.2 737.5 L1462.2 736.8 L1463.2 736.0 L1464.2 735.3 L1465.2 734.5 L1466.2 733.7 L1467.2 733.0 L1468.2 732.2 L1469.2 731.4 L1470.2 730.6 L1471.2 729.8 L1472.2 729.0 L1473.2 728.2 L1474.2 727.4 L1475.2 726.6 L1476.2 725.8 L1477.2 725.1 L1478.2 724.4 L1479.2 723.7 L1480.2 723.0 L1481.2 722.3 L1482.2 721.7 L1483.2 721.1 L1484.2 720.5 L1484.2 831.5Z" fill="#5f50b6"/><path d="M420.2 831.5 L420.2 831.0 L421.2 824.6 L422.2 818.5 L423.2 812.8 L424.2 807.5 L425.2 802.4 L426.2 797.6 L427.2 793.0 L428.2 788.8 L429.2 784.8 L430.2 781.3 L431.2 777.9 L432.2 774.8 L433.2 771.9 L434.2 769.2 L435.2 766.6 L436.2 764.1 L437.2 761.8 L438.2 759.6 L439.2 757.5 L440.2 755.5 L441.2 753.7 L442.2 751.9 L443.2 750.2 L444.2 748.6 L445.2 747.1 L446.2 745.7 L447.2 744.5 L448.2 743.4 L449.2 742.4 L450.2 741.5 L451.2 740.7 L452.2 739.9 L453.2 739.3 L454.2 738.8 L455.2 738.3 L456.2 737.9 L457.2 737.6 L458.2 737.4 L459.2 737.3 L460.2 737.2 L461.2 737.2 L462.2 737.3 L463.2 737.5 L464.2 737.7 L465.2 738.0 L466.2 738.4 L467.2 738.8 L468.2 739.4 L469.2 739.9 L470.2 740.6 L471.2 741.3 L472.2 742.1 L473.2 742.9 L474.2 743.7 L475.2 744.7 L476.2 745.6 L477.2 746.6 L478.2 747.6 L479.2 748.7 L480.2 749.8 L481.2 750.9 L482.2 752.1 L483.2 753.3 L484.2 754.5 L485.2 755.7 L486.2 756.9 L487.2 758.1 L488.2 759.3 L489.2 760.6 L490.2 761.8 L491.2 763.0 L492.2 764.2 L493.2 765.4 L494.2 766.6 L495.2 767.8 L496.2 768.9 L497.2 770.0 L498.2 771.1 L499.2 772.2 L500.2 773.2 L501.2 774.2 L502.2 775.2 L503.2 776.1 L504.2 776.9 L505.2 777.7 L506.2 778.5 L507.2 779.1 L508.2 779.8 L509.2 780.3 L510.2 780.8 L511.2 781.3 L512.2 781.6 L513.2 781.9 L514.2 782.1 L515.2 782.2 L516.2 782.3 L517.2 782.2 L518.2 782.1 L519.2 781.9 L520.2 781.7 L521.2 781.4 L522.2 780.9 L523.2 780.5 L524.2 779.9 L525.2 779.3 L526.2 778.6 L527.2 777.8 L528.2 776.9 L529.2 776.0 L530.2 775.0 L531.2 773.9 L532.2 772.7 L533.2 771.5 L534.2 770.2 L535.2 768.8 L536.2 767.4 L537.2 765.9 L538.2 764.5 L539.2 763.0 L540.2 761.5 L541.2 760.1 L542.2 758.7 L543.2 757.3 L544.2 756.0 L545.2 754.8 L546.2 753.5 L547.2 752.4 L548.2 751.3 L549.2 750.2 L550.2 749.2 L551.2 748.3 L552.2 747.4 L553.2 746.5 L554.2 745.7 L555.2 745.0 L556.2 744.3 L557.2 743.7 L558.2 743.2 L559.2 742.7 L560.2 742.3 L561.2 741.9 L562.2 741.6 L563.2 741.4 L564.2 741.2 L565.2 741.1 L566.2 741.1 L567.2 741.1 L568.2 741.2 L569.2 741.3 L570.2 741.6 L571.2 741.9 L572.2 742.3 L573.2 742.7 L574.2 743.2 L575.2 743.8 L576.2 744.5 L577.2 745.2 L578.2 746.1 L579.2 747.0 L580.2 747.9 L581.2 749.0 L582.2 750.1 L583.2 751.3 L584.2 752.5 L585.2 753.8 L586.2 755.2 L587.2 756.6 L588.2 758.0 L589.2 759.5 L590.2 761.0 L591.2 762.6 L592.2 764.2 L593.2 765.8 L594.2 767.4 L595.2 769.0 L596.2 770.7 L597.2 772.3 L598.2 774.0 L599.2 775.7 L600.2 777.3 L601.2 779.0 L602.2 780.6 L603.2 782.2 L604.2 783.8 L605.2 785.4 L606.2 786.9 L607.2 788.4 L608.2 789.8 L609.2 791.3 L610.2 792.6 L611.2 794.0 L612.2 795.3 L613.2 796.5 L614.2 797.7 L615.2 798.9 L616.2 800.0 L617.2 801.0 L618.2 802.0 L619.2 802.9 L620.2 803.8 L621.2 804.6 L622.2 805.4 L623.2 806.1 L624.2 806.7 L625.2 807.3 L626.2 807.8 L627.2 808.3 L628.2 808.6 L629.2 808.9 L630.2 809.1 L631.2 809.3 L632.2 809.3 L633.2 809.3 L634.2 809.3 L635.2 809.1 L636.2 808.8 L637.2 808.5 L638.2 808.1 L639.2 807.6 L640.2 807.0 L641.2 806.3 L642.2 805.5 L643.2 804.7 L644.2 803.7 L645.2 802.6 L646.2 801.5 L647.2 800.2 L648.2 798.9 L649.2 797.5 L650.2 796.1 L651.2 794.5 L652.2 792.9 L653.2 791.3 L654.2 789.6 L655.2 787.8 L656.2 786.0 L657.2 784.1 L658.2 782.2 L659.2 780.3 L660.2 778.4 L661.2 776.4 L662.2 774.4 L663.2 772.4 L664.2 770.4 L665.2 768.4 L666.2 766.3 L667.2 764.3 L668.2 762.3 L669.2 760.3 L670.2 758.3 L671.2 756.3 L672.2 754.4 L673.2 752.5 L674.2 750.6 L675.2 748.7 L676.2 746.9 L677.2 745.2 L678.2 743.4 L679.2 741.7 L680.2 740.1 L681.2 738.4 L682.2 736.8 L683.2 735.3 L684.2 733.8 L685.2 732.3 L686.2 730.8 L687.2 729.4 L688.2 728.0 L689.2 726.7 L690.2 725.3 L691.2 724.1 L692.2 722.8 L693.2 721.6 L694.2 720.4 L695.2 719.2 L696.2 718.1 L697.2 717.0 L698.2 715.9 L699.2 714.9 L700.2 713.9 L701.2 712.9 L702.2 712.0 L703.2 711.1 L704.2 710.2 L705.2 709.3 L706.2 708.5 L707.2 707.7 L708.2 707.0 L709.2 706.2 L710.2 705.5 L711.2 704.8 L712.2 704.2 L713.2 703.5 L714.2 702.9 L715.2 702.4 L716.2 701.8 L717.2 701.3 L718.2 700.8 L719.2 700.3 L720.2 699.9 L721.2 699.4 L722.2 699.0 L723.2 698.7 L724.2 698.3 L725.2 698.0 L726.2 697.7 L727.2 697.4 L728.2 697.2 L729.2 696.9 L730.2 696.7 L731.2 696.5 L732.2 696.4 L733.2 696.2 L734.2 696.1 L735.2 696.0 L736.2 695.9 L737.2 695.9 L738.2 695.8 L739.2 695.8 L740.2 695.8 L741.2 695.8 L742.2 695.9 L743.2 695.9 L744.2 696.0 L745.2 696.1 L746.2 696.2 L747.2 696.4 L748.2 696.5 L749.2 696.7 L750.2 696.9 L751.2 697.1 L752.2 697.4 L753.2 697.6 L754.2 697.9 L755.2 698.2 L756.2 698.5 L757.2 698.8 L758.2 699.2 L759.2 699.6 L760.2 700.0 L761.2 700.4 L762.2 700.8 L763.2 701.3 L764.2 701.8 L765.2 702.3 L766.2 702.8 L767.2 703.4 L768.2 703.9 L769.2 704.5 L770.2 705.2 L771.2 705.8 L772.2 706.5 L773.2 707.2 L774.2 707.9 L775.2 708.6 L776.2 709.4 L777.2 710.2 L778.2 711.0 L779.2 711.8 L780.2 712.7 L781.2 713.5 L782.2 714.5 L783.2 715.4 L784.2 716.3 L785.2 717.3 L786.2 718.3 L787.2 719.4 L788.2 720.4 L789.2 721.5 L790.2 722.6 L791.2 723.8 L792.2 724.9 L793.2 726.1 L794.2 727.3 L795.2 728.6 L796.2 729.8 L797.2 731.1 L798.2 732.5 L799.2 733.8 L800.2 735.2 L801.2 736.6 L802.2 738.0 L803.2 739.5 L804.2 741.0 L805.2 742.5 L806.2 744.1 L807.2 745.6 L808.2 747.2 L809.2 748.9 L810.2 750.5 L811.2 752.2 L812.2 754.0 L813.2 755.7 L814.2 757.5 L815.2 759.2 L816.2 761.0 L817.2 762.8 L818.2 764.6 L819.2 766.4 L820.2 768.2 L821.2 770.0 L822.2 771.7 L823.2 773.5 L824.2 775.2 L825.2 776.9 L826.2 778.6 L827.2 780.2 L828.2 781.8 L829.2 783.4 L830.2 784.9 L831.2 786.4 L832.2 787.8 L833.2 789.1 L834.2 790.4 L835.2 791.7 L836.2 792.8 L837.2 793.9 L838.2 794.9 L839.2 795.8 L840.2 796.7 L841.2 797.4 L842.2 798.1 L843.2 798.6 L844.2 799.1 L845.2 799.4 L846.2 799.7 L847.2 799.9 L848.2 800.0 L849.2 800.1 L850.2 800.0 L851.2 799.9 L852.2 799.7 L853.2 799.4 L854.2 799.0 L855.2 798.6 L856.2 798.1 L857.2 797.5 L858.2 796.9 L859.2 796.2 L860.2 795.5 L861.2 794.7 L862.2 793.8 L863.2 792.9 L864.2 791.9 L865.2 790.9 L866.2 789.9 L867.2 788.8 L868.2 787.7 L869.2 786.5 L870.2 785.3 L871.2 784.0 L872.2 782.8 L873.2 781.5 L874.2 780.2 L875.2 778.9 L876.2 777.5 L877.2 776.2 L878.2 774.8 L879.2 773.4 L880.2 772.0 L881.2 770.7 L882.2 769.3 L883.2 767.9 L884.2 766.6 L885.2 765.2 L886.2 763.9 L887.2 762.6 L888.2 761.3 L889.2 760.0 L890.2 758.8 L891.2 757.6 L892.2 756.4 L893.2 755.3 L894.2 754.2 L895.2 753.1 L896.2 752.1 L897.2 751.1 L898.2 750.2 L899.2 749.3 L900.2 748.5 L901.2 747.7 L902.2 746.9 L903.2 746.2 L904.2 745.5 L905.2 744.9 L906.2 744.3 L907.2 743.8 L908.2 743.3 L909.2 742.8 L910.2 742.4 L911.2 742.1 L912.2 741.8 L913.2 741.5 L914.2 741.3 L915.2 741.2 L916.2 741.0 L917.2 741.0 L918.2 741.0 L919.2 741.0 L920.2 741.1 L921.2 741.3 L922.2 741.5 L923.2 741.7 L924.2 742.0 L925.2 742.4 L926.2 742.8 L927.2 743.2 L928.2 743.7 L929.2 744.3 L930.2 744.8 L931.2 745.5 L932.2 746.1 L933.2 746.8 L934.2 747.5 L935.2 748.3 L936.2 749.1 L937.2 749.9 L938.2 750.7 L939.2 751.6 L940.2 752.5 L941.2 753.4 L942.2 754.3 L943.2 755.3 L944.2 756.2 L945.2 757.2 L946.2 758.2 L947.2 759.2 L948.2 760.2 L949.2 761.3 L950.2 762.3 L951.2 763.3 L952.2 764.3 L953.2 765.4 L954.2 766.4 L955.2 767.4 L956.2 768.5 L957.2 769.5 L958.2 770.5 L959.2 771.5 L960.2 772.5 L961.2 773.5 L962.2 774.4 L963.2 775.4 L964.2 776.3 L965.2 777.2 L966.2 778.1 L967.2 778.9 L968.2 779.7 L969.2 780.6 L970.2 781.3 L971.2 782.1 L972.2 782.8 L973.2 783.4 L974.2 784.1 L975.2 784.7 L976.2 785.2 L977.2 785.8 L978.2 786.2 L979.2 786.7 L980.2 787.0 L981.2 787.4 L982.2 787.7 L983.2 787.9 L984.2 788.1 L985.2 788.2 L986.2 788.2 L987.2 788.2 L988.2 788.2 L989.2 788.1 L990.2 787.9 L991.2 787.7 L992.2 787.4 L993.2 787.0 L994.2 786.6 L995.2 786.1 L996.2 785.6 L997.2 785.0 L998.2 784.3 L999.2 783.5 L1000.2 782.7 L1001.2 781.8 L1002.2 780.9 L1003.2 779.8 L1004.2 778.8 L1005.2 777.6 L1006.2 776.5 L1007.2 775.3 L1008.2 774.0 L1009.2 772.8 L1010.2 771.5 L1011.2 770.2 L1012.2 768.9 L1013.2 767.6 L1014.2 766.3 L1015.2 764.9 L1016.2 763.6 L1017.2 762.4 L1018.2 761.1 L1019.2 759.9 L1020.2 758.6 L1021.2 757.5 L1022.2 756.3 L1023.2 755.3 L1024.2 754.2 L1025.2 753.3 L1026.2 752.4 L1027.2 751.5 L1028.2 750.7 L1029.2 750.0 L1030.2 749.4 L1031.2 748.8 L1032.2 748.2 L1033.2 747.7 L1034.2 747.3 L1035.2 746.9 L1036.2 746.6 L1037.2 746.4 L1038.2 746.2 L1039.2 746.0 L1040.2 745.9 L1041.2 745.8 L1042.2 745.8 L1043.2 745.9 L1044.2 746.0 L1045.2 746.1 L1046.2 746.3 L1047.2 746.5 L1048.2 746.8 L1049.2 747.1 L1050.2 747.4 L1051.2 747.8 L1052.2 748.3 L1053.2 748.7 L1054.2 749.3 L1055.2 749.8 L1056.2 750.4 L1057.2 751.0 L1058.2 751.7 L1059.2 752.4 L1060.2 753.1 L1061.2 753.9 L1062.2 754.7 L1063.2 755.5 L1064.2 756.3 L1065.2 757.2 L1066.2 758.1 L1067.2 759.0 L1068.2 760.0 L1069.2 761.0 L1070.2 762.0 L1071.2 763.0 L1072.2 764.0 L1073.2 765.1 L1074.2 766.1 L1075.2 767.2 L1076.2 768.3 L1077.2 769.4 L1078.2 770.4 L1079.2 771.5 L1080.2 772.6 L1081.2 773.7 L1082.2 774.7 L1083.2 775.8 L1084.2 776.8 L1085.2 777.9 L1086.2 778.9 L1087.2 779.9 L1088.2 780.9 L1089.2 781.9 L1090.2 782.8 L1091.2 783.7 L1092.2 784.6 L1093.2 785.4 L1094.2 786.3 L1095.2 787.1 L1096.2 787.8 L1097.2 788.5 L1098.2 789.2 L1099.2 789.8 L1100.2 790.4 L1101.2 790.9 L1102.2 791.4 L1103.2 791.9 L1104.2 792.2 L1105.2 792.6 L1106.2 792.8 L1107.2 793.0 L1108.2 793.2 L1109.2 793.2 L1110.2 793.3 L1111.2 793.2 L1112.2 793.1 L1113.2 793.0 L1114.2 792.8 L1115.2 792.5 L1116.2 792.2 L1117.2 791.8 L1118.2 791.4 L1119.2 791.0 L1120.2 790.5 L1121.2 790.0 L1122.2 789.4 L1123.2 788.9 L1124.2 788.2 L1125.2 787.6 L1126.2 786.9 L1127.2 786.2 L1128.2 785.4 L1129.2 784.7 L1130.2 783.9 L1131.2 783.1 L1132.2 782.3 L1133.2 781.5 L1134.2 780.6 L1135.2 779.8 L1136.2 778.9 L1137.2 778.0 L1138.2 777.1 L1139.2 776.3 L1140.2 775.4 L1141.2 774.5 L1142.2 773.6 L1143.2 772.8 L1144.2 771.9 L1145.2 771.0 L1146.2 770.2 L1147.2 769.3 L1148.2 768.5 L1149.2 767.7 L1150.2 766.8 L1151.2 766.0 L1152.2 765.2 L1153.2 764.5 L1154.2 763.7 L1155.2 763.0 L1156.2 762.2 L1157.2 761.5 L1158.2 760.8 L1159.2 760.2 L1160.2 759.5 L1161.2 758.9 L1162.2 758.3 L1163.2 757.7 L1164.2 757.1 L1165.2 756.6 L1166.2 756.1 L1167.2 755.6 L1168.2 755.2 L1169.2 754.8 L1170.2 754.4 L1171.2 754.0 L1172.2 753.7 L1173.2 753.4 L1174.2 753.2 L1175.2 753.0 L1176.2 752.8 L1177.2 752.7 L1178.2 752.6 L1179.2 752.5 L1180.2 752.5 L1181.2 752.5 L1182.2 752.6 L1183.2 752.7 L1184.2 752.9 L1185.2 753.1 L1186.2 753.3 L1187.2 753.6 L1188.2 754.0 L1189.2 754.4 L1190.2 754.8 L1191.2 755.2 L1192.2 755.7 L1193.2 756.3 L1194.2 756.9 L1195.2 757.5 L1196.2 758.2 L1197.2 758.9 L1198.2 759.6 L1199.2 760.4 L1200.2 761.2 L1201.2 762.0 L1202.2 762.9 L1203.2 763.8 L1204.2 764.8 L1205.2 765.8 L1206.2 766.8 L1207.2 767.8 L1208.2 768.9 L1209.2 770.0 L1210.2 771.2 L1211.2 772.4 L1212.2 773.6 L1213.2 774.8 L1214.2 776.0 L1215.2 777.3 L1216.2 778.5 L1217.2 779.7 L1218.2 780.9 L1219.2 781.9 L1220.2 782.9 L1221.2 783.7 L1222.2 784.5 L1223.2 785.1 L1224.2 785.5 L1225.2 785.7 L1226.2 785.7 L1227.2 785.5 L1228.2 785.1 L1229.2 784.4 L1230.2 783.4 L1231.2 782.1 L1232.2 780.5 L1233.2 778.6 L1234.2 776.3 L1235.2 773.8 L1236.2 771.0 L1237.2 768.1 L1238.2 765.0 L1239.2 761.9 L1240.2 758.7 L1241.2 755.5 L1242.2 752.4 L1243.2 749.4 L1244.2 746.6 L1245.2 743.8 L1246.2 741.2 L1247.2 738.7 L1248.2 736.4 L1249.2 734.1 L1250.2 732.0 L1251.2 730.1 L1252.2 728.3 L1253.2 726.6 L1254.2 725.1 L1255.2 723.7 L1256.2 722.4 L1257.2 721.3 L1258.2 720.2 L1259.2 719.2 L1260.2 718.3 L1261.2 717.5 L1262.2 716.8 L1263.2 716.1 L1264.2 715.5 L1265.2 714.9 L1266.2 714.4 L1267.2 714.0 L1268.2 713.5 L1269.2 713.1 L1270.2 712.7 L1271.2 712.3 L1272.2 712.0 L1273.2 711.7 L1274.2 711.4 L1275.2 711.2 L1276.2 711.1 L1277.2 711.1 L1278.2 711.1 L1279.2 711.2 L1280.2 711.4 L1281.2 711.7 L1282.2 712.0 L1283.2 712.4 L1284.2 712.9 L1285.2 713.4 L1286.2 714.0 L1287.2 714.7 L1288.2 715.4 L1289.2 716.2 L1290.2 717.0 L1291.2 717.9 L1292.2 718.8 L1293.2 719.8 L1294.2 720.9 L1295.2 722.0 L1296.2 723.1 L1297.2 724.3 L1298.2 725.5 L1299.2 726.7 L1300.2 728.0 L1301.2 729.3 L1302.2 730.7 L1303.2 732.0 L1304.2 733.5 L1305.2 734.9 L1306.2 736.3 L1307.2 737.8 L1308.2 739.3 L1309.2 740.8 L1310.2 742.4 L1311.2 743.9 L1312.2 745.4 L1313.2 747.0 L1314.2 748.6 L1315.2 750.1 L1316.2 751.7 L1317.2 753.3 L1318.2 754.9 L1319.2 756.4 L1320.2 758.0 L1321.2 759.6 L1322.2 761.1 L1323.2 762.7 L1324.2 764.2 L1325.2 765.7 L1326.2 767.2 L1327.2 768.7 L1328.2 770.1 L1329.2 771.5 L1330.2 772.9 L1331.2 774.3 L1332.2 775.7 L1333.2 777.0 L1334.2 778.2 L1335.2 779.5 L1336.2 780.7 L1337.2 781.9 L1338.2 783.0 L1339.2 784.0 L1340.2 785.1 L1341.2 786.1 L1342.2 787.0 L1343.2 787.9 L1344.2 788.7 L1345.2 789.5 L1346.2 790.3 L1347.2 790.9 L1348.2 791.6 L1349.2 792.2 L1350.2 792.7 L1351.2 793.2 L1352.2 793.7 L1353.2 794.1 L1354.2 794.5 L1355.2 794.8 L1356.2 795.0 L1357.2 795.2 L1358.2 795.4 L1359.2 795.5 L1360.2 795.6 L1361.2 795.6 L1362.2 795.6 L1363.2 795.5 L1364.2 795.4 L1365.2 795.3 L1366.2 795.0 L1367.2 794.8 L1368.2 794.5 L1369.2 794.1 L1370.2 793.7 L1371.2 793.3 L1372.2 792.8 L1373.2 792.2 L1374.2 791.6 L1375.2 791.0 L1376.2 790.3 L1377.2 789.6 L1378.2 788.8 L1379.2 788.0 L1380.2 787.1 L1381.2 786.2 L1382.2 785.2 L1383.2 784.2 L1384.2 783.2 L1385.2 782.1 L1386.2 781.0 L1387.2 779.9 L1388.2 778.7 L1389.2 777.6 L1390.2 776.4 L1391.2 775.3 L1392.2 774.1 L1393.2 773.0 L1394.2 771.9 L1395.2 770.7 L1396.2 769.7 L1397.2 768.6 L1398.2 767.6 L1399.2 766.6 L1400.2 765.6 L1401.2 764.7 L1402.2 763.8 L1403.2 763.0 L1404.2 762.3 L1405.2 761.6 L1406.2 761.0 L1407.2 760.5 L1408.2 760.1 L1409.2 759.7 L1410.2 759.4 L1411.2 759.3 L1412.2 759.2 L1413.2 759.2 L1414.2 759.3 L1415.2 759.6 L1416.2 759.9 L1417.2 760.3 L1418.2 760.7 L1419.2 761.3 L1420.2 761.9 L1421.2 762.6 L1422.2 763.3 L1423.2 764.0 L1424.2 764.8 L1425.2 765.7 L1426.2 766.5 L1427.2 767.4 L1428.2 768.3 L1429.2 769.2 L1430.2 770.1 L1431.2 771.0 L1432.2 771.9 L1433.2 772.8 L1434.2 773.6 L1435.2 774.4 L1436.2 775.2 L1437.2 775.9 L1438.2 776.6 L1439.2 777.2 L1440.2 777.8 L1441.2 778.3 L1442.2 778.7 L1443.2 779.0 L1444.2 779.3 L1445.2 779.4 L1446.2 779.5 L1447.2 779.4 L1448.2 779.3 L1449.2 779.0 L1450.2 778.6 L1451.2 778.2 L1452.2 777.6 L1453.2 777.0 L1454.2 776.3 L1455.2 775.5 L1456.2 774.6 L1457.2 773.7 L1458.2 772.7 L1459.2 771.7 L1460.2 770.6 L1461.2 769.4 L1462.2 768.2 L1463.2 767.0 L1464.2 765.7 L1465.2 764.4 L1466.2 763.0 L1467.2 761.6 L1468.2 760.3 L1469.2 758.8 L1470.2 757.4 L1471.2 756.0 L1472.2 754.6 L1473.2 753.1 L1474.2 751.7 L1475.2 750.3 L1476.2 748.9 L1477.2 747.5 L1478.2 746.1 L1479.2 744.8 L1480.2 743.5 L1481.2 742.2 L1482.2 740.9 L1483.2 739.7 L1484.2 738.6 L1484.2 831.5Z" fill="#cd3764"/></svg>

<div class="abs" style="left:409px;top:831px;width:1075px;height:2px;background:#9aa1a1"></div>
<div class="xlab" style="left:411.8px">1</div><div class="xlab" style="left:441.3px">2</div><div class="xlab" style="left:472px">3</div><div class="xlab" style="left:502.8px">4</div><div class="xlab" style="left:533.9px">5</div><div class="xlab" style="left:565px">6</div><div class="xlab" style="left:595.3px">7</div><div class="xlab" style="left:626px">8</div><div class="xlab" style="left:657px">9</div><div class="xlab" style="left:690.5px">10</div><div class="xlab" style="left:726.6px">11</div><div class="xlab" style="left:762.3px">12</div><div class="xlab" style="left:798.7px">13</div><div class="xlab" style="left:835.2px">14</div><div class="xlab" style="left:871.7px">15</div><div class="xlab" style="left:908.1px">16</div><div class="xlab" style="left:944.6px">17</div><div class="xlab" style="left:980.7px">18</div><div class="xlab" style="left:1017.5px">19</div><div class="xlab" style="left:1054.8px">20</div><div class="xlab" style="left:1092.8px">21</div><div class="xlab" style="left:1130px">22</div><div class="xlab" style="left:1168.4px">23</div><div class="xlab" style="left:1207.2px">24</div><div class="xlab" style="left:1246px">25</div><div class="xlab" style="left:1285px">26</div><div class="xlab" style="left:1323px">27</div><div class="xlab" style="left:1361.5px">28</div><div class="xlab" style="left:1400.6px">29</div><div class="xlab" style="left:1439.4px">30</div><div class="xlab" style="left:1477px">31</div>
<div class="t" style="left:402px;top:863px;font-size:12.5px;color:#364141">Dec</div>

<div class="sw" style="left:724px;background:#0bc1b0"></div>
<div class="leg" style="left:747px">Twitter</div>
<div class="sw" style="left:821px;background:#5e50b8"></div>
<div class="leg" style="left:843px">Facebook</div>
<div class="sw" style="left:936px;background:#cc3763"></div>
<div class="leg" style="left:959px">Instagram</div>
<div class="sw" style="left:1054px;background:#fbc71c"></div>
<div class="leg" style="left:1077px">LinkedIn</div>

<div class="card" style="left:373px;top:946px;width:1111px;height:100px;border-color:#dfe2e2;border-radius:6px"></div>
<div class="t" style="left:392px;top:965px;font-size:13px;color:#364141">Audience Metrics</div>
<div class="t" style="left:1246px;top:965px;font-size:13px;color:#364141">Totals</div>
<div class="t" style="left:1409px;top:965px;font-size:12.3px;color:#364141">% Change</div>

<!-- right rail -->
<div id="rrail">
  <div class="abs" style="left:8px;top:9px;width:53px;height:53px;border-radius:50%;background:#2079c3"></div>
  <svg style="left:25px;top:26px" width="19" height="19" viewBox="0 0 19 19"><path d="M8 2.5 L2.5 2.5 Q1 2.5 1 4 L1 16.5 Q1 18 2.5 18 L15 18 Q16.5 18 16.5 16.5 L16.5 11" stroke="#fff" stroke-width="2" fill="none"/><path d="M15 0.8 L18.2 4 L9.5 12.7 L5.8 13.2 L6.3 9.5 Z" fill="#fff"/></svg>
  <svg style="left:26px;top:88px" width="17" height="19" viewBox="0 0 17 19"><path d="M8.5 0 Q9.7 0 9.7 1.3 Q14 2.3 14 7.5 L14 11.5 L16.5 14.5 L16.5 15.5 L0.5 15.5 L0.5 14.5 L3 11.5 L3 7.5 Q3 2.3 7.3 1.3 Q7.3 0 8.5 0 Z" fill="#273333"/><path d="M6.5 16.5 L10.5 16.5 Q10.5 18.5 8.5 18.5 Q6.5 18.5 6.5 16.5 Z" fill="#273333"/></svg>
  <div class="abs" style="left:41px;top:83px;width:9px;height:9px;border-radius:50%;background:#2079c3;border:1px solid #fff"></div>
  <svg style="left:25px;top:141px" width="19" height="20" viewBox="0 0 19 20"><path d="M9.5 0.5 Q18.5 0.5 18.5 8.5 Q18.5 16 9.5 16 L5 16 L1 19.5 L1 8.5 Q1 0.5 9.5 0.5 Z" fill="#273333"/><path d="M11 3.5 L5.5 9.5 L9 9.5 L7.5 13 L13.5 7 L10 7 Z" fill="#fff"/></svg>
  <div class="abs" style="left:40px;top:135px;width:10px;height:10px;border-radius:50%;background:#2079c3;border:1px solid #fff"></div>
  <svg style="left:25px;top:195px" width="19" height="19" viewBox="0 0 19 19"><circle cx="9.5" cy="9.5" r="9" fill="#273333"/><path d="M6.5 7 Q6.5 4 9.5 4 Q12.5 4 12.5 6.8 Q12.5 8.5 10.5 9.5 L10.5 11" stroke="#fff" stroke-width="2.2" fill="none"/><circle cx="10.3" cy="14.2" r="1.3" fill="#fff"/></svg>
</div>
<div class="abs" style="left:329px;top:973px;width:1271px;height:1px;background:#dfe2e2"></div>
<div class="abs" style="left:329px;top:0;width:1271px;height:1px;background:#dfe2e2"></div>
<div class="abs" style="left:1599px;top:0;width:1px;height:974px;background:#dfe2e2"></div>
</body></html>
